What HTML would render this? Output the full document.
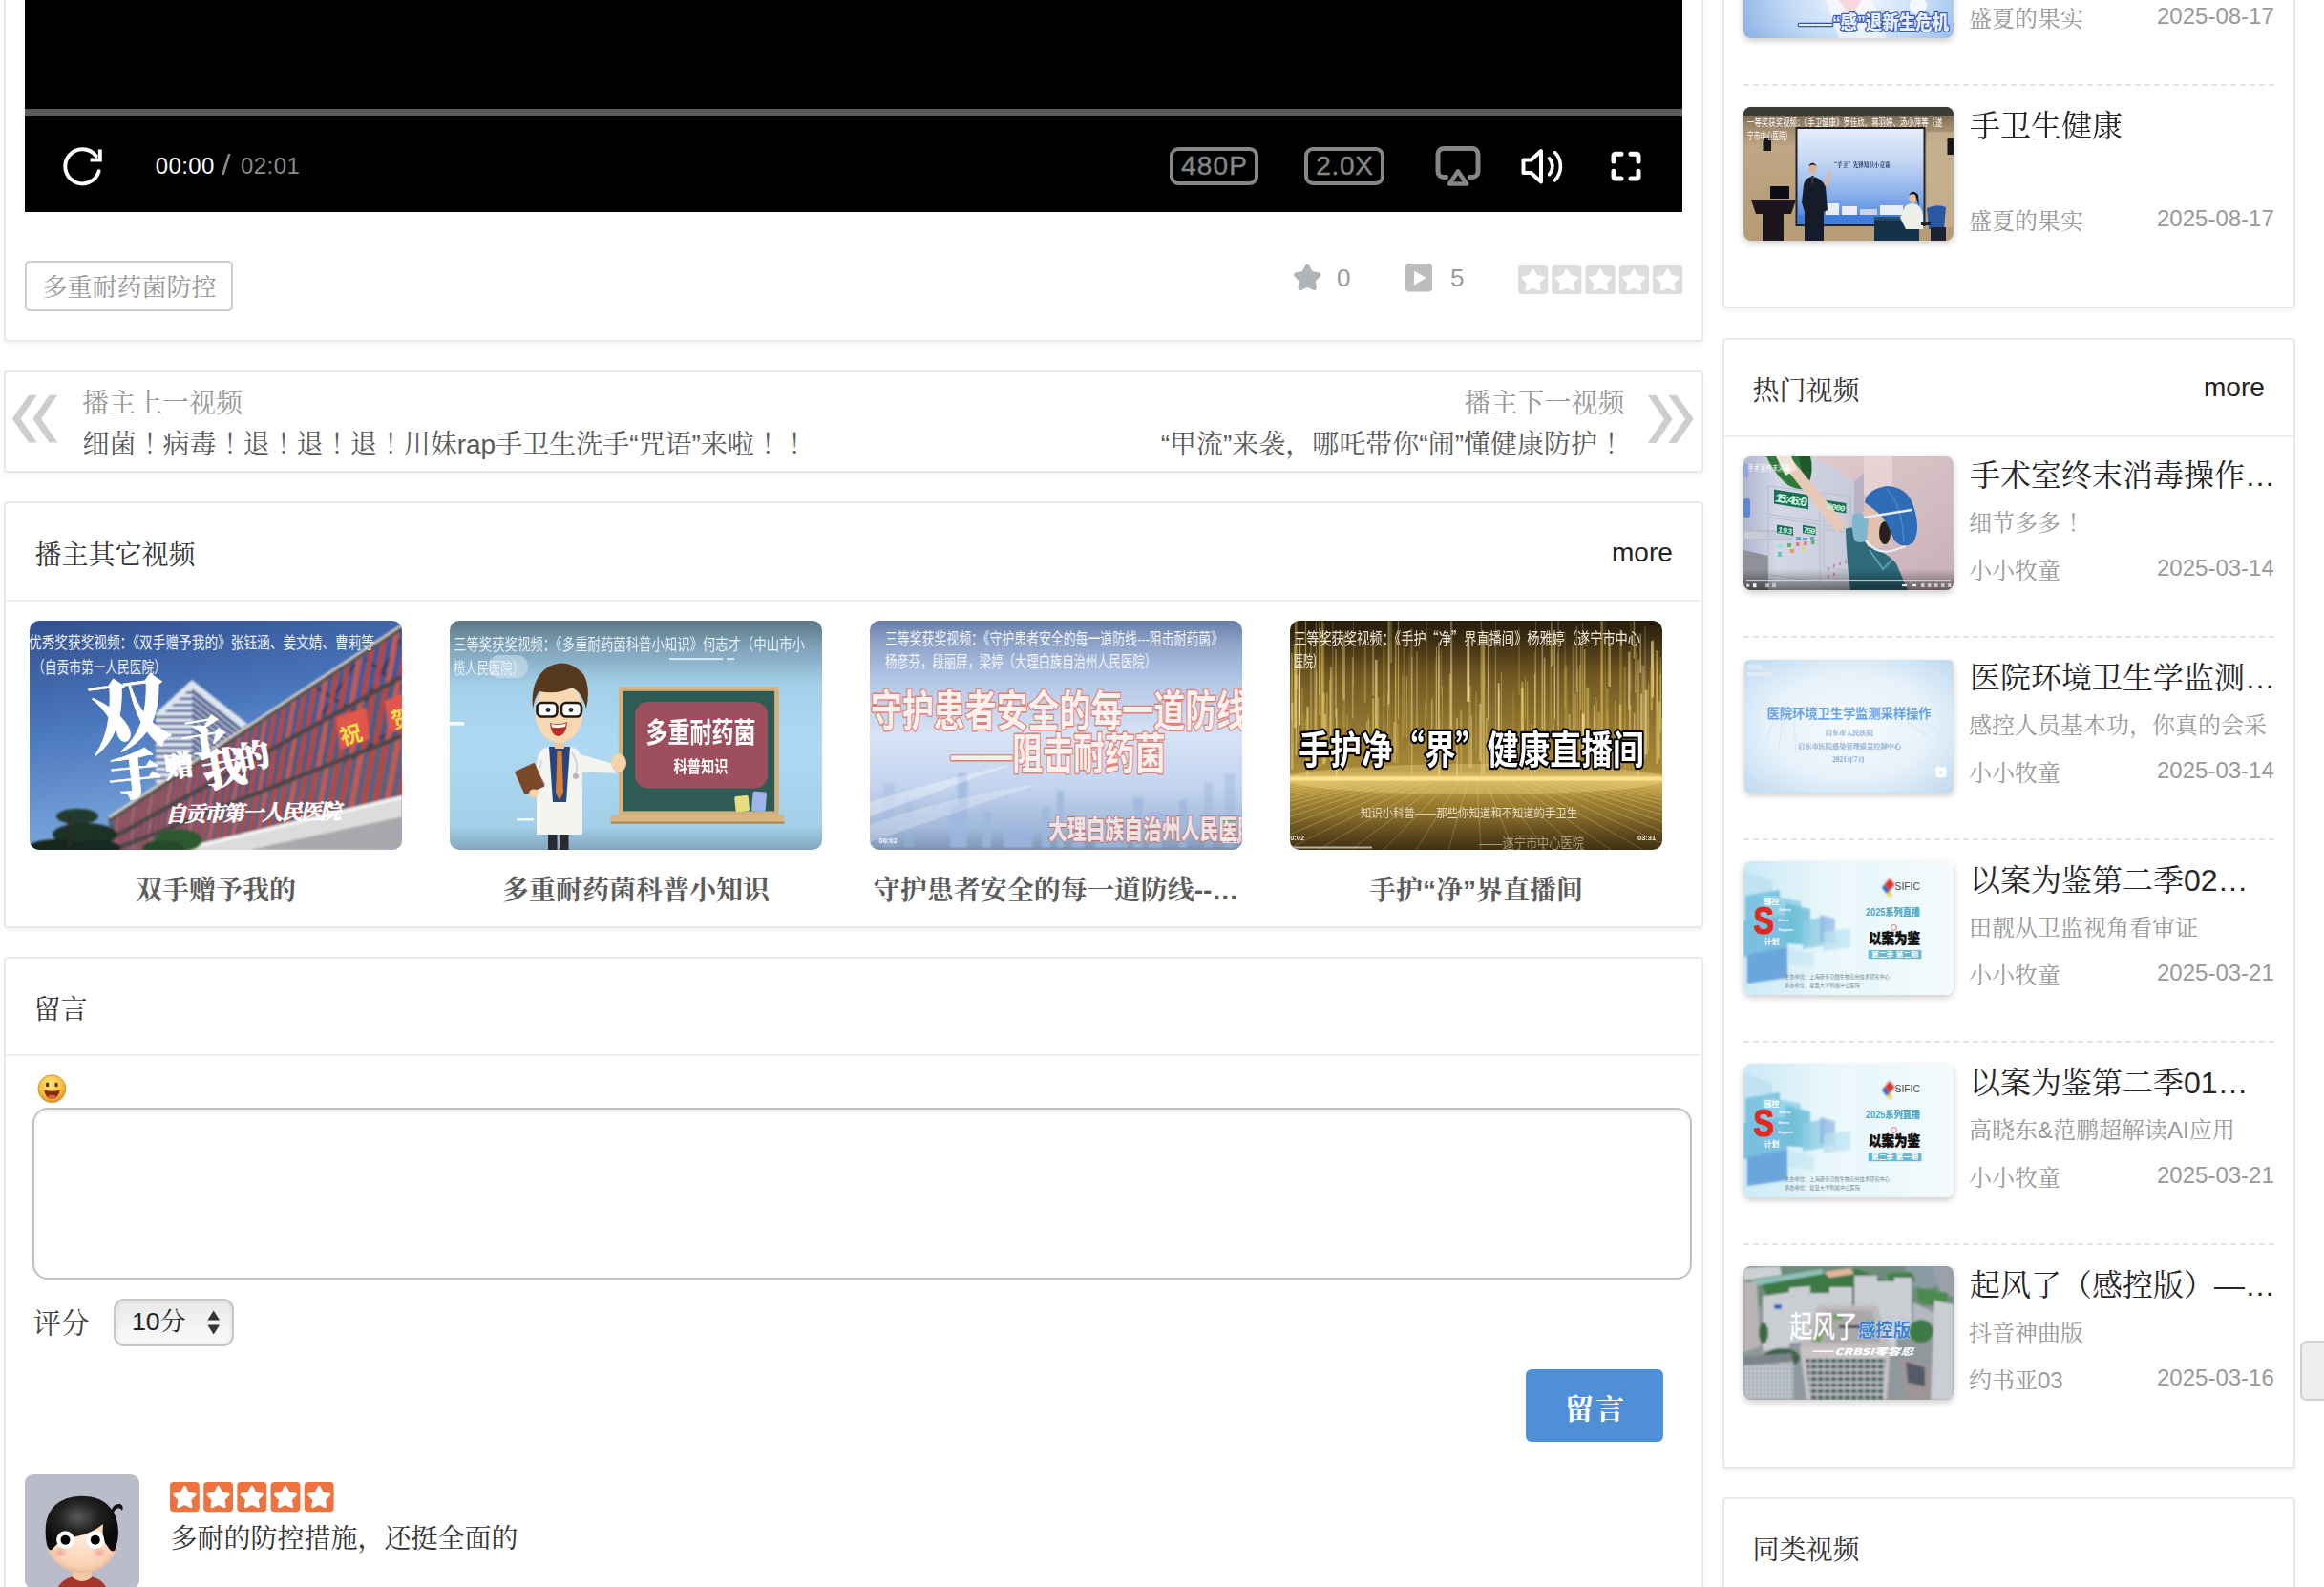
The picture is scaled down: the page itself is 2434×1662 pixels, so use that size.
<!DOCTYPE html>
<html lang="zh-CN">
<head>
<meta charset="utf-8">
<title>视频播放</title>
<style>
html,body{margin:0;padding:0;}
body{width:2434px;height:1662px;overflow:hidden;position:relative;background:#fff;
 font-family:"Liberation Sans","Noto Serif CJK SC",serif;color:#333;}
.card{position:absolute;box-sizing:border-box;background:#fff;border:2px solid #e9e9e9;border-radius:4px;
 box-shadow:0 3px 5px rgba(0,0,0,.045);}
.t{position:absolute;white-space:nowrap;line-height:1;margin:0;padding:0;}
.abs{position:absolute;}
.hr{position:absolute;height:2px;background:#f0f0f0;}
.dash{position:absolute;height:0;border-top:2px dashed #e3e3e3;}
.g9{color:#999;}
.ex{font-style:normal;position:relative;left:7.5px;}
.f24{font-size:24px;}
.f26{font-size:26px;}
.f28{font-size:28px;}
.f32{font-size:32px;}
.thumb{position:absolute;overflow:hidden;border-radius:10px;}
.sth{position:absolute;overflow:hidden;border-radius:8px;box-shadow:0 3px 7px rgba(0,0,0,.20);width:220px;height:140px;left:1826px;}
.ov{position:absolute;color:#fff;font-family:"Liberation Sans","Noto Sans CJK SC",sans-serif;white-space:nowrap;line-height:1;}
.ttl{position:absolute;font-size:28px;font-weight:700;color:#5c5c5c;line-height:1;width:390px;text-align:center;white-space:nowrap;top:919px;}
.stitle{left:2063px;color:#262626;}
.sdate{left:2259px;color:#999;font-size:24px;}
.ssub{left:2062px;color:#999;font-size:24px;}
</style>
</head>
<body>

<!-- ============ LEFT COLUMN ============ -->
<!-- card 1 : player -->
<div class="card" style="left:4px;top:-20px;width:1780px;height:378px;"></div>
<div class="abs" id="player" style="left:26px;top:0;width:1736px;height:222px;background:#000;"></div>
<div class="abs" style="left:26px;top:114px;width:1736px;height:8px;background:#5c5c5c;"></div>

<svg class="abs" style="left:0;top:0;" width="1800" height="380" viewBox="0 0 1800 380" fill="none">
 <!-- replay -->
 <path d="M103.6 179.2 A18 18 0 1 1 100.6 163.4" stroke="#fff" stroke-width="4" stroke-linecap="round"/>
 <path d="M94.5 167.5 H104.8 V156.5" stroke="#fff" stroke-width="4" stroke-linecap="butt" stroke-linejoin="miter"/>
 <!-- definition / speed boxes -->
 <rect x="1227" y="156" width="89" height="36" rx="7" stroke="#868686" stroke-width="4"/>
 <rect x="1368" y="156" width="80" height="36" rx="7" stroke="#868686" stroke-width="4"/>
 <!-- airplay -->
 <path d="M1514.5 185.5 H1512 A6 6 0 0 1 1506 179.5 V161.5 A6 6 0 0 1 1512 155.5 H1542 A6 6 0 0 1 1548 161.5 V179.5 A6 6 0 0 1 1542 185.5 H1539.5" stroke="#868686" stroke-width="5" stroke-linecap="round"/>
 <path d="M1527 179.5 L1536 192.5 H1518 Z" stroke="#868686" stroke-width="4.6" stroke-linejoin="round"/>
 <!-- volume -->
 <path d="M1595.5 167.5 H1603.5 L1614 158 V190.5 L1603.5 181 H1595.5 Z" stroke="#fff" stroke-width="4" stroke-linejoin="round"/>
 <path d="M1622.5 165.8 A12.5 12.5 0 0 1 1622.5 182.8" stroke="#fff" stroke-width="3.6" stroke-linecap="round"/>
 <path d="M1628.5 159.6 A21 21 0 0 1 1628.5 188.8" stroke="#fff" stroke-width="3.6" stroke-linecap="round"/>
 <!-- fullscreen -->
 <path d="M1690 169 V163.2 A2 2 0 0 1 1692 161.2 H1698 M1708 161.2 H1714 A2 2 0 0 1 1716 163.2 V169 M1716 179.2 V185 A2 2 0 0 1 1714 187 H1708 M1698 187 H1692 A2 2 0 0 1 1690 185 V179.2" stroke="#fff" stroke-width="5" stroke-linecap="round"/>
</svg>
<div class="t" style="left:162.8px;top:162px;font-size:24px;color:#fff;letter-spacing:.4px;">00:00</div>
<div class="t" style="left:232px;top:157.5px;font-size:30px;color:#8a8a8a;transform:scaleX(1.15);transform-origin:0 0;">/</div>
<div class="t" style="left:252px;top:162px;font-size:24px;color:#8c8c8c;letter-spacing:.45px;">02:01</div>
<div class="t" style="left:1225px;top:160px;width:93px;text-align:center;font-size:28px;color:#868686;letter-spacing:1.2px;text-indent:1.2px;-webkit-text-stroke:.4px #868686;">480P</div>
<div class="t" style="left:1366px;top:160px;width:84px;text-align:center;font-size:28px;color:#868686;letter-spacing:.7px;text-indent:.7px;-webkit-text-stroke:.4px #868686;">2.0X</div>


<!-- tag -->
<div class="abs" style="left:26px;top:273px;width:218px;height:53px;box-sizing:border-box;border:2px solid #ccc;border-radius:5px;"></div>
<div class="t f26 g9" style="left:44.5px;top:288px;">多重耐药菌防控</div>

<svg class="abs" style="left:1340px;top:260px;" width="440" height="60" viewBox="1340 260 440 60">
 <polygon points="1369.2,279.4 1373.0,286.4 1380.8,287.8 1375.3,293.6 1376.4,301.5 1369.2,298.0 1362.0,301.5 1363.1,293.6 1357.6,287.8 1365.4,286.4" fill="#b0b3b9" stroke="#b0b3b9" stroke-width="5" stroke-linejoin="round"/>
 <rect x="1472" y="276" width="28" height="29.5" rx="4" fill="#bdbdbd"/>
 <path d="M1481 283.5 L1493.6 291 L1481 298.8 Z" fill="#fff"/>
 <rect x="1590.0" y="278" width="31.2" height="30" rx="3.5" fill="#dddddd"/>
 <polygon points="1605.6,282.8 1609.1,289.4 1616.4,290.7 1611.2,296.0 1612.3,303.4 1605.6,300.1 1598.9,303.4 1600.0,296.0 1594.8,290.7 1602.1,289.4" fill="#fff" stroke="#fff" stroke-width="2.6" stroke-linejoin="round"/>
 <rect x="1625.2" y="278" width="31.2" height="30" rx="3.5" fill="#dddddd"/>
 <polygon points="1640.8,282.8 1644.3,289.4 1651.7,290.7 1646.5,296.0 1647.6,303.4 1640.8,300.1 1634.1,303.4 1635.2,296.0 1630.0,290.7 1637.4,289.4" fill="#fff" stroke="#fff" stroke-width="2.6" stroke-linejoin="round"/>
 <rect x="1660.5" y="278" width="31.2" height="30" rx="3.5" fill="#dddddd"/>
 <polygon points="1676.1,282.8 1679.6,289.4 1686.9,290.7 1681.7,296.0 1682.8,303.4 1676.1,300.1 1669.4,303.4 1670.5,296.0 1665.3,290.7 1672.6,289.4" fill="#fff" stroke="#fff" stroke-width="2.6" stroke-linejoin="round"/>
 <rect x="1695.8" y="278" width="31.2" height="30" rx="3.5" fill="#dddddd"/>
 <polygon points="1711.3,282.8 1714.8,289.4 1722.2,290.7 1717.0,296.0 1718.1,303.4 1711.3,300.1 1704.6,303.4 1705.7,296.0 1700.5,290.7 1707.9,289.4" fill="#fff" stroke="#fff" stroke-width="2.6" stroke-linejoin="round"/>
 <rect x="1731.0" y="278" width="31.2" height="30" rx="3.5" fill="#dddddd"/>
 <polygon points="1746.6,282.8 1750.1,289.4 1757.4,290.7 1752.2,296.0 1753.3,303.4 1746.6,300.1 1739.9,303.4 1741.0,296.0 1735.8,290.7 1743.1,289.4" fill="#fff" stroke="#fff" stroke-width="2.6" stroke-linejoin="round"/>
</svg>
<div class="t f26 g9" style="left:1400px;top:278px;">0</div>
<div class="t f26 g9" style="left:1519px;top:278px;">5</div>


<!-- card 2 : prev / next -->
<div class="card" style="left:4px;top:388px;width:1780px;height:107px;"></div>
<div class="t f28 g9" style="left:86px;top:409px;">播主上一视频</div>
<div class="t f28" style="left:86.5px;top:452px;color:#5a5a5a;">细菌<i class="ex">！</i>病毒<i class="ex">！</i>退<i class="ex">！</i>退<i class="ex">！</i>退<i class="ex">！</i>川妹rap手卫生洗手“咒语”来啦<i class="ex">！</i><i class="ex">！</i></div>
<div class="t f28 g9" style="right:732.5px;top:409px;">播主下一视频</div>
<div class="t f28" style="right:733px;top:452px;color:#5a5a5a;">“甲流”来袭，哪吒带你“闹”懂健康防护<i class="ex">！</i></div>
<svg class="abs" style="left:0;top:400px;" width="1800" height="80" viewBox="0 400 1800 80" fill="#cdcdcd">
 <polygon points="30.1,413.7 38.7,413.7 21.5,438.6 38.7,463.6 30.1,463.6 12.9,438.6"/>
 <polygon points="51.6,413.7 60.2,413.7 43,438.6 60.2,463.6 51.6,463.6 34.4,438.6"/>
 <polygon points="1725.8,413.7 1734.4,413.7 1751.6,438.8 1734.4,464 1725.8,464 1743,438.8"/>
 <polygon points="1747.3,413.7 1755.9,413.7 1773.8,438.8 1755.9,464 1747.3,464 1765.2,438.8"/>
</svg>


<!-- card 3 : other videos -->
<div class="card" style="left:4px;top:525px;width:1780px;height:447px;"></div>
<div class="t f28" style="left:36.5px;top:567.5px;color:#333;">播主其它视频</div>
<div class="t f28" style="left:1688px;top:564.5px;color:#222;">more</div>
<div class="hr" style="left:6px;top:628px;width:1776px;"></div>

<!-- THUMBS-BEGIN -->
<div class="thumb" style="left:31px;top:650px;width:390px;height:240px;"><svg width="390" height="240" viewBox="0 0 390 240" font-family="Liberation Sans,Noto Sans CJK SC,sans-serif">
<defs>
<linearGradient id="t1sky" x1="0" y1="0" x2=".25" y2="1"><stop offset="0" stop-color="#33508f"/><stop offset=".45" stop-color="#4a76bd"/><stop offset="1" stop-color="#7eaadf"/></linearGradient>
<linearGradient id="t1f1" x1="0" y1="0" x2="1" y2="0"><stop offset="0" stop-color="#5d5f78"/><stop offset="1" stop-color="#40599c"/></linearGradient>
<pattern id="t1b" width="8" height="6.4" patternUnits="userSpaceOnUse"><rect width="8" height="6.4" fill="#e6ebf3"/><rect y="3.6" width="8" height="2.8" fill="#50669a"/></pattern>
<pattern id="t1c" width="8" height="6.4" patternUnits="userSpaceOnUse" patternTransform="skewY(38)"><rect width="8" height="6.4" fill="#a9b5cf"/><rect y="3.4" width="8" height="3" fill="#36497a"/></pattern>
<filter id="b1"><feGaussianBlur stdDeviation="0.8"/></filter>
</defs>
<rect width="390" height="240" fill="url(#t1sky)"/>
<g filter="url(#b1)">
<polygon points="132,97 170,62 170,215 132,215" fill="url(#t1b)"/>
<polygon points="170,62 228,108 228,200 170,215" fill="url(#t1c)"/>
<polygon points="132,97 170,62 228,108 222,112 170,70 137,100" fill="#dfe5ee"/>
<polygon points="83.0,206.5 390.0,4.8 390.0,58.8 83.0,229.5" fill="url(#t1f1)" />
<polygon points="83.0,229.5 390.0,58.8 390.0,120.9 83.0,241.9" fill="#505a80" />
<polygon points="83.0,241.9 390.0,120.9 390.0,183.3 83.0,256.1" fill="#5c6180" />
<g stroke="#2d3350" stroke-width="3" opacity=".8"><line x1="300" y1="70" x2="345" y2="98"/><line x1="340" y1="46" x2="300" y2="108"/><line x1="352" y1="40" x2="390" y2="70"/><line x1="388" y1="20" x2="352" y2="84"/><line x1="330" y1="150" x2="372" y2="120"/></g>
<polygon points="92.7,200.1 95.2,198.5 90.5,225.4 88.0,226.7" fill="#c65a4b" />
<polygon points="90.6,225.3 93.1,223.9 90.5,238.9 88.0,239.9" fill="#c65a4b" />
<polygon points="91.0,238.7 93.5,237.8 90.5,254.3 88.0,254.9" fill="#c65a4b" />
<polygon points="98.2,196.5 100.7,194.9 95.9,222.4 93.3,223.8" fill="#b8473b" />
<polygon points="96.1,222.2 98.7,220.8 95.9,236.8 93.3,237.8" fill="#b8473b" />
<polygon points="96.5,236.6 99.0,235.6 95.9,253.0 93.3,253.6" fill="#b8473b" />
<polygon points="103.8,192.8 106.4,191.1 101.4,219.3 98.8,220.7" fill="#b8473b" />
<polygon points="101.8,219.1 104.4,217.6 101.4,234.6 98.8,235.6" fill="#b8473b" />
<polygon points="102.2,234.3 104.8,233.3 101.4,251.7 98.8,252.3" fill="#b8473b" />
<polygon points="109.5,189.1 112.2,187.3 107.1,216.1 104.5,217.6" fill="#c65a4b" />
<polygon points="107.6,215.8 110.3,214.3 107.1,232.4 104.5,233.4" fill="#c65a4b" />
<polygon points="108.0,232.0 110.7,231.0 107.1,250.4 104.5,251.0" fill="#c65a4b" />
<polygon points="115.4,185.2 118.2,183.4 113.0,212.8 110.3,214.4" fill="#b8473b" />
<polygon points="113.6,212.5 116.4,211.0 113.0,230.1 110.3,231.1" fill="#b8473b" />
<polygon points="114.0,229.7 116.7,228.6 113.0,249.0 110.3,249.6" fill="#b8473b" />
<polygon points="121.5,181.2 124.3,179.3 119.1,209.5 116.2,211.0" fill="#b8473b" />
<polygon points="119.8,209.1 122.6,207.5 119.1,227.7 116.2,228.8" fill="#b8473b" />
<polygon points="120.1,227.3 122.9,226.1 119.1,247.5 116.2,248.2" fill="#b8473b" />
<polygon points="127.8,177.1 130.7,175.2 125.3,206.0 122.4,207.6" fill="#c65a4b" />
<polygon points="126.1,205.5 129.0,203.9 125.3,225.2 122.4,226.4" fill="#c65a4b" />
<polygon points="126.4,224.8 129.3,223.6 125.3,246.1 122.4,246.8" fill="#c65a4b" />
<polygon points="134.2,172.8 137.2,170.9 131.7,202.5 128.7,204.1" fill="#b8473b" />
<polygon points="132.6,201.9 135.6,200.3 131.7,222.7 128.7,223.9" fill="#b8473b" />
<polygon points="132.9,222.2 135.9,221.0 131.7,244.6 128.7,245.3" fill="#b8473b" />
<polygon points="140.8,168.5 143.9,166.5 138.2,198.8 135.2,200.5" fill="#b8473b" />
<polygon points="139.3,198.2 142.4,196.5 138.2,220.1 135.2,221.3" fill="#b8473b" />
<polygon points="139.6,219.6 142.7,218.4 138.2,243.0 135.2,243.7" fill="#b8473b" />
<polygon points="147.6,164.0 150.8,162.0 145.0,195.1 141.8,196.8" fill="#c65a4b" />
<polygon points="146.2,194.4 149.3,192.6 145.0,217.5 141.8,218.7" fill="#c65a4b" />
<polygon points="146.5,216.9 149.6,215.6 145.0,241.4 141.8,242.1" fill="#c65a4b" />
<polygon points="154.6,159.4 157.8,157.3 151.9,191.2 148.7,193.0" fill="#b8473b" />
<polygon points="153.3,190.5 156.5,188.7 151.9,214.7 148.7,216.0" fill="#b8473b" />
<polygon points="153.6,214.1 156.8,212.8 151.9,239.8 148.7,240.5" fill="#b8473b" />
<polygon points="161.8,154.7 165.1,152.5 159.0,187.2 155.7,189.1" fill="#b8473b" />
<polygon points="160.5,186.4 163.9,184.6 159.0,211.9 155.7,213.2" fill="#b8473b" />
<polygon points="160.8,211.2 164.2,209.9 159.0,238.1 155.7,238.9" fill="#b8473b" />
<polygon points="169.2,149.9 172.6,147.6 166.4,183.2 162.9,185.1" fill="#c65a4b" />
<polygon points="168.0,182.3 171.4,180.4 166.4,209.0 162.9,210.4" fill="#c65a4b" />
<polygon points="168.3,208.3 171.7,206.9 166.4,236.3 162.9,237.1" fill="#c65a4b" />
<polygon points="176.7,144.9 180.3,142.6 173.9,179.0 170.4,180.9" fill="#b8473b" />
<polygon points="175.7,178.0 179.2,176.0 173.9,206.1 170.4,207.5" fill="#b8473b" />
<polygon points="176.0,205.3 179.5,203.9 173.9,234.5 170.4,235.4" fill="#b8473b" />
<polygon points="184.6,139.8 188.2,137.4 181.6,174.7 178.0,176.7" fill="#b8473b" />
<polygon points="183.6,173.6 187.2,171.6 181.6,203.0 178.0,204.4" fill="#b8473b" />
<polygon points="183.8,202.2 187.5,200.7 181.6,232.7 178.0,233.6" fill="#b8473b" />
<polygon points="192.6,134.5 196.3,132.0 189.6,170.2 185.9,172.3" fill="#c65a4b" />
<polygon points="191.7,169.1 195.4,167.0 189.6,199.9 185.9,201.3" fill="#c65a4b" />
<polygon points="192.0,199.0 195.7,197.5 189.6,230.8 185.9,231.7" fill="#c65a4b" />
<polygon points="200.8,129.1 204.6,126.6 197.8,165.7 194.0,167.8" fill="#b8473b" />
<polygon points="200.0,164.4 203.9,162.3 197.8,196.7 194.0,198.2" fill="#b8473b" />
<polygon points="200.3,195.7 204.1,194.2 197.8,228.9 194.0,229.8" fill="#b8473b" />
<polygon points="209.3,123.5 213.2,120.9 206.2,161.0 202.3,163.2" fill="#b8473b" />
<polygon points="208.6,159.7 212.5,157.5 206.2,193.3 202.3,194.9" fill="#b8473b" />
<polygon points="208.9,192.3 212.8,190.7 206.2,226.9 202.3,227.8" fill="#b8473b" />
<polygon points="218.0,117.8 222.0,115.1 214.9,156.2 210.8,158.4" fill="#c65a4b" />
<polygon points="217.4,154.8 221.5,152.5 214.9,189.9 210.8,191.5" fill="#c65a4b" />
<polygon points="217.7,188.8 221.7,187.2 214.9,224.8 210.8,225.8" fill="#c65a4b" />
<polygon points="227.0,111.9 231.1,109.2 223.8,151.3 219.6,153.6" fill="#b8473b" />
<polygon points="226.5,149.7 230.6,147.4 223.8,186.4 219.6,188.1" fill="#b8473b" />
<polygon points="226.7,185.3 230.9,183.6 223.8,222.7 219.6,223.7" fill="#b8473b" />
<polygon points="236.2,105.8 240.4,103.0 232.9,146.2 228.6,148.5" fill="#b8473b" />
<polygon points="235.8,144.6 240.1,142.2 232.9,182.8 228.6,184.5" fill="#b8473b" />
<polygon points="236.0,181.6 240.3,179.9 232.9,220.6 228.6,221.6" fill="#b8473b" />
<polygon points="245.6,99.6 250.0,96.7 242.3,140.9 237.9,143.4" fill="#c65a4b" />
<polygon points="245.4,139.2 249.8,136.8 242.3,179.1 237.9,180.9" fill="#c65a4b" />
<polygon points="245.6,177.8 250.0,176.1 242.3,218.3 237.9,219.4" fill="#c65a4b" />
<polygon points="255.4,93.2 259.9,90.3 252.0,135.6 247.4,138.1" fill="#b8473b" />
<polygon points="255.2,133.7 259.8,131.2 252.0,175.3 247.4,177.1" fill="#b8473b" />
<polygon points="255.4,173.9 260.0,172.2 252.0,216.0 247.4,217.1" fill="#b8473b" />
<polygon points="265.4,86.7 270.0,83.6 261.9,130.1 257.2,132.6" fill="#b8473b" />
<polygon points="265.4,128.1 270.0,125.5 261.9,171.4 257.2,173.2" fill="#b8473b" />
<polygon points="265.6,170.0 270.2,168.1 261.9,213.7 257.2,214.8" fill="#b8473b" />
<polygon points="275.7,79.9 280.4,76.8 272.1,124.4 267.3,127.0" fill="#c65a4b" />
<polygon points="275.8,122.3 280.5,119.7 272.1,167.4 267.3,169.3" fill="#c65a4b" />
<polygon points="276.0,165.9 280.7,164.0 272.1,211.3 267.3,212.4" fill="#c65a4b" />
<polygon points="286.2,73.0 291.1,69.7 282.6,118.5 277.7,121.3" fill="#b8473b" />
<polygon points="286.5,116.4 291.4,113.7 282.6,163.2 277.7,165.2" fill="#b8473b" />
<polygon points="286.6,161.6 291.5,159.7 282.6,208.8 277.7,209.9" fill="#b8473b" />
<polygon points="297.1,65.8 302.1,62.5 293.4,112.5 288.3,115.3" fill="#b8473b" />
<polygon points="297.5,110.3 302.5,107.5 293.4,159.0 288.3,161.0" fill="#b8473b" />
<polygon points="297.6,157.3 302.7,155.3 293.4,206.2 288.3,207.4" fill="#b8473b" />
<polygon points="308.3,58.5 313.5,55.1 304.5,106.4 299.3,109.3" fill="#c65a4b" />
<polygon points="308.8,104.0 314.0,101.1 304.5,154.6 299.3,156.7" fill="#c65a4b" />
<polygon points="308.9,152.9 314.1,150.8 304.5,203.6 299.3,204.8" fill="#c65a4b" />
<polygon points="319.8,50.9 325.1,47.4 315.9,100.0 310.6,103.0" fill="#b8473b" />
<polygon points="320.4,97.5 325.7,94.6 315.9,150.1 310.6,152.2" fill="#b8473b" />
<polygon points="320.5,148.3 325.9,146.2 315.9,200.9 310.6,202.2" fill="#b8473b" />
<polygon points="331.6,43.2 337.0,39.6 327.6,93.5 322.1,96.6" fill="#b8473b" />
<polygon points="332.4,90.9 337.8,87.8 327.6,145.5 322.1,147.7" fill="#b8473b" />
<polygon points="332.5,143.6 338.0,141.4 327.6,198.1 322.1,199.4" fill="#b8473b" />
<polygon points="343.7,35.2 349.3,31.5 339.7,86.8 334.0,89.9" fill="#c65a4b" />
<polygon points="344.6,84.0 350.3,80.9 339.7,140.8 334.0,143.0" fill="#c65a4b" />
<polygon points="344.8,138.8 350.4,136.5 339.7,195.3 334.0,196.6" fill="#c65a4b" />
<polygon points="356.2,27.0 362.0,23.2 352.1,79.9 346.3,83.1" fill="#b8473b" />
<polygon points="357.3,77.0 363.1,73.8 352.1,135.9 346.3,138.2" fill="#b8473b" />
<polygon points="357.4,133.8 363.2,131.5 352.1,192.3 346.3,193.7" fill="#b8473b" />
<polygon points="369.0,18.6 375.0,14.7 364.8,72.8 358.8,76.1" fill="#b8473b" />
<polygon points="370.3,69.8 376.2,66.5 364.8,130.9 358.8,133.2" fill="#b8473b" />
<polygon points="370.3,128.7 376.3,126.3 364.8,189.3 358.8,190.7" fill="#b8473b" />
<polygon points="382.2,9.9 388.3,5.9 377.9,65.6 371.8,69.0" fill="#c65a4b" />
<polygon points="383.6,62.4 389.7,59.0 377.9,125.7 371.8,128.1" fill="#c65a4b" />
<polygon points="383.7,123.4 389.8,121.0 377.9,186.2 371.8,187.6" fill="#c65a4b" />
<polygon points="395.8,1.0 402.1,-3.1 391.3,58.1 385.1,61.6" fill="#b8473b" />
<polygon points="397.3,54.8 403.6,51.3 391.3,120.4 385.1,122.9" fill="#b8473b" />
<polygon points="397.4,118.0 403.7,115.5 391.3,183.0 385.1,184.5" fill="#b8473b" />
<g fill="none"><line x1="83" y1="229.5" x2="390" y2="58.8" stroke="#4b4649" stroke-width="4.5"/><line x1="83" y1="241.9" x2="390" y2="120.9" stroke="#4b4649" stroke-width="4.5"/><line x1="83" y1="209.0" x2="390" y2="7.3" stroke="#5a5250" stroke-width="5"/><line x1="83" y1="206.0" x2="390" y2="4.3" stroke="#e2dbd2" stroke-width="2.2"/></g>
<polygon points="120.0,247.3 390.0,183.3 390.0,240.0 120.0,248.0" fill="#dcdcda" />
<polygon points="230.0,240.0 390.0,205.3 390.0,240.0" fill="#a9a9ad" />
<polygon points="120.0,247.3 390.0,183.3 390.0,187.3 120.0,251.3" fill="#f2f2f0" />
<polygon points="321,101 352,91 356,124 325,135" fill="#e2574b"/>
<polygon points="372,84 392,76 392,112 376,118" fill="#e2574b"/>
<ellipse cx="50" cy="205" rx="22" ry="8" fill="#203a2e"/><ellipse cx="58" cy="224" rx="34" ry="12" fill="#1c3226"/><ellipse cx="28" cy="238" rx="30" ry="9" fill="#15261e"/>
<ellipse cx="70" cy="238" rx="26" ry="8" fill="#172a20"/>
<ellipse cx="156" cy="230" rx="25" ry="12" fill="#2e5a32"/><ellipse cx="140" cy="238" rx="22" ry="8" fill="#25482a"/>
<rect x="40" y="206" width="3" height="30" fill="#2a2a22"/>
</g>
<text x="324" y="127" font-size="23" fill="#f3e04e" font-weight="700" transform="rotate(-16 338 115)">祝</text>
<text x="378" y="112" font-size="23" fill="#f3e04e" font-weight="700" transform="rotate(-16 385 100)">贺</text>
<text x="-1" y="29.2" font-size="17" fill="#eef2fa" textLength="362" lengthAdjust="spacingAndGlyphs" >优秀奖获奖视频：《双手赠予我的》张钰涵、姜文婧、曹莉等</text>
<text x="3" y="54.8" font-size="17" fill="#eef2fa" textLength="140" lengthAdjust="spacingAndGlyphs" >（自贡市第一人民医院）</text>
<g font-family="Noto Serif CJK SC,serif" font-weight="900" fill="#fff" stroke="#fff" stroke-width=".7">
<text x="62" y="128" font-size="84" transform="rotate(-8 105 100)">双</text>
<text x="82" y="182" font-size="56" transform="rotate(-6 110 160)">手</text>
<text x="141" y="163" font-size="30" transform="rotate(-8 155 150)">赠</text>
<text x="158" y="142" font-size="48" transform="rotate(-10 175 120)">予</text>
<text x="180" y="172" font-size="46" transform="rotate(-10 200 150)">我</text>
<text x="217" y="155" font-size="34" transform="rotate(-12 230 140)">的</text>
<text x="142" y="209" font-size="22" font-weight="700" font-style="italic" textLength="184" transform="rotate(-1 230 200)">自贡市第一人民医院</text>
</g>
</svg></div>
<div class="thumb" style="left:471px;top:650px;width:390px;height:240px;"><svg width="390" height="240" viewBox="0 0 390 240" font-family="Liberation Sans,Noto Sans CJK SC,sans-serif">
<defs>
<linearGradient id="t2bg" x1="0" y1="0" x2="0" y2="1"><stop offset="0" stop-color="#5d7886"/><stop offset=".12" stop-color="#7fa3ba"/><stop offset=".28" stop-color="#a4cfe8"/><stop offset=".55" stop-color="#afd9f3"/><stop offset=".9" stop-color="#a3cfe9"/><stop offset="1" stop-color="#7fa6bd"/></linearGradient>
<filter id="b2"><feGaussianBlur stdDeviation="0.6"/></filter>
</defs>
<rect width="390" height="240" fill="url(#t2bg)"/>
<g filter="url(#b2)">
<rect x="0" y="106" width="15" height="3.5" fill="#fff"/><rect x="70" y="207" width="18" height="2.5" fill="#fff" opacity=".9"/>
<rect x="230" y="39" width="56" height="2.2" fill="#e8f1f6" opacity=".8"/><rect x="290" y="39" width="8" height="2.2" fill="#e8f1f6" opacity=".8"/>
<rect x="40" y="36" width="42" height="24" rx="12" fill="#d6e6ee" opacity=".55"/>
<!-- board -->
<rect x="176.8" y="69" width="168" height="135" fill="#d4b17c"/>
<rect x="181.5" y="73.8" width="158.6" height="125.6" fill="#2f5b55"/>
<rect x="168.6" y="203.3" width="181.7" height="9" fill="#d9b680"/>
<rect x="168.6" y="210.5" width="181.7" height="2.2" fill="#a88a5c"/>
<rect x="194" y="85" width="139" height="90.5" rx="14" fill="#9e4f5d"/>
<rect x="298.8" y="183.4" width="14.6" height="16.4" rx="2" fill="#e8dd7d" transform="rotate(-6 306 191)"/>
<rect x="316.8" y="179" width="14.6" height="20.8" rx="2.5" fill="#9fb4ea" transform="rotate(5 324 189)"/>
<!-- doctor -->
<rect x="103" y="222" width="9.5" height="20" fill="#2a2a2e"/><rect x="115" y="222" width="9.5" height="20" fill="#2a2a2e"/>
<path d="M91 150 Q92 134 104 132 H126 Q138 134 139 150 V224 H91 Z" fill="#f3f3ef"/>
<path d="M136 140 L172 150 L174 160 L137 158 Z" fill="#f3f3ef"/>
<path d="M104 132 H126 L122 190 H108 Z" fill="#28467e"/>
<path d="M112.5 136 H117.5 L119 180 L115 188 L111 180 Z" fill="#d9803c"/>
<path d="M96 146 Q92 160 100 172" fill="none" stroke="#c9c9c9" stroke-width="1.4"/><path d="M128 138 Q136 150 132 160" fill="none" stroke="#c9c9c9" stroke-width="1.4"/><circle cx="132" cy="163" r="3" fill="#b5b5b5"/>
<ellipse cx="177" cy="149" rx="8" ry="9.5" fill="#f6d2a8"/>
<path d="M91 150 L84 176 L92 180 L99 160 Z" fill="#f3f3ef"/>
<rect x="72" y="152" width="23" height="27" rx="1.5" fill="#7a4a2c" transform="rotate(-24 84 165)"/>
<ellipse cx="88" cy="181" rx="5" ry="4.5" fill="#f6d2a8"/>
<rect x="110" y="122" width="10" height="12" fill="#efc79c"/>
<ellipse cx="114.5" cy="96" rx="25" ry="32" fill="#f8d8b2"/>
<path d="M87 92 Q84 60 104 48 Q124 38 140 56 Q148 70 143 92 Q138 74 128 70 Q112 78 94 74 Q89 80 87 92 Z" fill="#57371f"/>
<rect x="91.5" y="86" width="21" height="14.5" rx="5" fill="#fff" stroke="#1f1a18" stroke-width="2.6"/><rect x="117" y="86" width="21" height="14.5" rx="5" fill="#fff" stroke="#1f1a18" stroke-width="2.6"/>
<circle cx="103" cy="93.5" r="2.4" fill="#222"/><circle cx="127" cy="93.5" r="2.4" fill="#222"/>
<path d="M105 107 Q114 110 123 106 Q122 121 113 121 Q106 120 105 107 Z" fill="#b9322e"/><path d="M106.5 108 Q114 110.5 121.8 107.4 L121 111 Q114 113 107 111.5 Z" fill="#fff"/>
</g>
<text x="205.5" y="127.6" font-size="29" fill="#fff" textLength="115" lengthAdjust="spacingAndGlyphs" font-weight="700">多重耐药菌</text>
<text x="234.5" y="159" font-size="17" fill="#fff" textLength="57" lengthAdjust="spacingAndGlyphs" font-weight="700">科普知识</text>
<text x="4" y="30.5" font-size="17" fill="#e9f1f6" textLength="368" lengthAdjust="spacingAndGlyphs" >三等奖获奖视频：《多重耐药菌科普小知识》何志才（中山市小</text>
<text x="4" y="55.5" font-size="17" fill="#e9f1f6" textLength="74" lengthAdjust="spacingAndGlyphs" >榄人民医院）</text>
</svg></div>
<div class="thumb" style="left:911px;top:650px;width:390px;height:240px;"><svg width="390" height="240" viewBox="0 0 390 240" font-family="Liberation Sans,Noto Sans CJK SC,sans-serif">
<defs>
<linearGradient id="t3bg" x1="0" y1="0" x2="0" y2="1"><stop offset="0" stop-color="#6a7fa8"/><stop offset=".1" stop-color="#8ea3c8"/><stop offset=".25" stop-color="#b1c5e6"/><stop offset=".5" stop-color="#d7e3f6"/><stop offset=".72" stop-color="#c3d4ee"/><stop offset=".9" stop-color="#a3badb"/><stop offset="1" stop-color="#8096b7"/></linearGradient>
<filter id="b3"><feGaussianBlur stdDeviation="1.2"/></filter>
</defs>
<rect width="390" height="240" fill="url(#t3bg)"/>
<g filter="url(#b3)" fill="#9db7e0" opacity=".75">
<rect x="92" y="160" width="10" height="80"/><rect x="84" y="192" width="8" height="48"/><rect x="118" y="200" width="9" height="40"/><rect x="14" y="170" width="12" height="70" opacity=".5"/><rect x="36" y="186" width="10" height="54" opacity=".5"/>
<rect x="180" y="196" width="9" height="44"/><rect x="196" y="178" width="7" height="62"/><rect x="212" y="206" width="12" height="34"/><rect x="276" y="186" width="10" height="54"/><rect x="292" y="200" width="14" height="40"/><rect x="324" y="188" width="8" height="52"/><rect x="350" y="170" width="9" height="70" opacity=".6"/><rect x="372" y="160" width="10" height="80" opacity=".6"/>
<rect x="140" y="214" width="30" height="26"/><rect x="236" y="212" width="34" height="28"/>
</g>
<path d="M0 190 Q60 170 150 150 L0 205 Z" fill="#fff" opacity=".35"/>
<path d="M0 214 Q60 190 180 170 L0 232 Z" fill="#fff" opacity=".25"/>
<text x="16" y="25" font-size="17" fill="#f3f6fc" textLength="354" lengthAdjust="spacingAndGlyphs" >三等奖获奖视频：《守护患者安全的每一道防线---阻击耐药菌》</text>
<text x="16" y="48.6" font-size="17" fill="#f3f6fc" textLength="284" lengthAdjust="spacingAndGlyphs" >杨彦芬，段丽屏，梁婷（大理白族自治州人民医院）</text>
<text x="1" y="110.5" font-size="45" fill="#fdf1ef" textLength="395" lengthAdjust="spacingAndGlyphs" font-weight="700" stroke="#e27f74" stroke-width="2.8" paint-order="stroke" stroke-linejoin="round">守护患者安全的每一道防线</text>
<text x="85" y="155.5" font-size="45" fill="#fdf1ef" textLength="225" lengthAdjust="spacingAndGlyphs" font-weight="700" stroke="#e27f74" stroke-width="2.8" paint-order="stroke" stroke-linejoin="round">——阻击耐药菌</text>
<text x="187" y="229" font-size="28" fill="#e9e3e6" textLength="218" lengthAdjust="spacingAndGlyphs" font-weight="900" stroke="#c8685f" stroke-width="1.8" paint-order="stroke">大理白族自治州人民医院</text>
<text x="9.5" y="233" font-size="7.5" fill="#f4f6fa" font-weight="700">00:02</text>
<text x="369" y="233" font-size="7.5" fill="#f4f6fa" font-weight="700">02:11</text>
<rect x="0" y="237.5" width="390" height="2.5" fill="#7d8fa8" opacity=".8"/>
</svg></div>
<div class="thumb" style="left:1351px;top:650px;width:390px;height:240px;"><svg width="390" height="240" viewBox="0 0 390 240" font-family="Liberation Sans,Noto Sans CJK SC,sans-serif">
<defs>
<linearGradient id="t4bg" x1="0" y1="0" x2="0" y2="1"><stop offset="0" stop-color="#3b2c12"/><stop offset=".2" stop-color="#6b5322"/><stop offset=".45" stop-color="#8f7430"/><stop offset=".66" stop-color="#a98a3a"/><stop offset=".69" stop-color="#e8c660"/><stop offset=".705" stop-color="#c9a64a"/><stop offset=".8" stop-color="#9a7c32"/><stop offset="1" stop-color="#5a461c"/></linearGradient>
<radialGradient id="t4gl" cx="50%" cy="69%" r="60%" gradientTransform="scale(1 .5) translate(0 .69)"><stop offset="0" stop-color="#ffe9a0" stop-opacity=".55"/><stop offset="1" stop-color="#ffe9a0" stop-opacity="0"/></radialGradient>
<linearGradient id="t4v" x1="0" y1="0" x2="0" y2="1"><stop offset="0" stop-color="#000" stop-opacity=".35"/><stop offset=".25" stop-color="#000" stop-opacity="0"/><stop offset=".85" stop-color="#000" stop-opacity="0"/><stop offset="1" stop-color="#000" stop-opacity=".3"/></linearGradient>
<filter id="b4"><feGaussianBlur stdDeviation="0.5"/></filter>
</defs>
<rect width="390" height="240" fill="url(#t4bg)"/>
<g filter="url(#b4)">
<rect x="126.3" y="8.1" width="2.2" height="116.7" fill="#e9cf7a" opacity="0.34"/>
<rect x="142.6" y="-3.0" width="1.6" height="105.5" fill="#c9a648" opacity="0.32"/>
<rect x="27.2" y="0.9" width="0.8" height="93.1" fill="#d8b858" opacity="0.80"/>
<rect x="245.9" y="60.0" width="0.8" height="44.1" fill="#d8b858" opacity="0.65"/>
<rect x="18.2" y="93.0" width="0.8" height="49.6" fill="#f5e3a0" opacity="0.39"/>
<rect x="218.5" y="71.8" width="1.0" height="45.6" fill="#f5e3a0" opacity="0.64"/>
<rect x="38.0" y="75.5" width="1.6" height="68.5" fill="#c9a648" opacity="0.67"/>
<rect x="303.1" y="45.9" width="1.0" height="114.0" fill="#d8b858" opacity="0.52"/>
<rect x="272.6" y="19.3" width="1.2" height="101.3" fill="#c9a648" opacity="0.62"/>
<rect x="112.3" y="107.6" width="1.2" height="42.2" fill="#d8b858" opacity="0.55"/>
<rect x="364.0" y="40.6" width="2.2" height="122.2" fill="#f5e3a0" opacity="0.35"/>
<rect x="132.6" y="32.0" width="0.8" height="86.7" fill="#e9cf7a" opacity="0.78"/>
<rect x="368.4" y="46.9" width="2.8" height="92.5" fill="#f5e3a0" opacity="0.34"/>
<rect x="252.4" y="109.2" width="1.6" height="53.8" fill="#f5e3a0" opacity="0.47"/>
<rect x="8.8" y="45.4" width="0.8" height="53.5" fill="#d8b858" opacity="0.37"/>
<rect x="299.6" y="5.5" width="1.6" height="69.8" fill="#e9cf7a" opacity="0.53"/>
<rect x="64.9" y="38.2" width="1.6" height="64.4" fill="#f5e3a0" opacity="0.38"/>
<rect x="275.5" y="108.4" width="1.0" height="52.0" fill="#d8b858" opacity="0.53"/>
<rect x="32.4" y="8.2" width="2.2" height="117.6" fill="#d8b858" opacity="0.31"/>
<rect x="102.5" y="-9.5" width="2.2" height="96.8" fill="#f5e3a0" opacity="0.52"/>
<rect x="371.7" y="72.9" width="2.8" height="67.4" fill="#e9cf7a" opacity="0.67"/>
<rect x="178.1" y="94.5" width="2.2" height="70.0" fill="#c9a648" opacity="0.71"/>
<rect x="155.2" y="37.3" width="1.0" height="82.7" fill="#e9cf7a" opacity="0.54"/>
<rect x="384.0" y="42.9" width="0.8" height="49.1" fill="#e9cf7a" opacity="0.66"/>
<rect x="221.0" y="54.4" width="0.8" height="108.0" fill="#d8b858" opacity="0.67"/>
<rect x="239.5" y="7.8" width="1.2" height="69.8" fill="#c9a648" opacity="0.51"/>
<rect x="47.9" y="91.9" width="1.6" height="73.9" fill="#f5e3a0" opacity="0.58"/>
<rect x="33.5" y="2.3" width="2.8" height="82.4" fill="#d8b858" opacity="0.46"/>
<rect x="201.4" y="14.6" width="2.8" height="146.0" fill="#e9cf7a" opacity="0.52"/>
<rect x="295.7" y="25.8" width="1.2" height="104.4" fill="#f5e3a0" opacity="0.35"/>
<rect x="354.2" y="32.7" width="2.2" height="60.8" fill="#f5e3a0" opacity="0.62"/>
<rect x="248.2" y="63.6" width="1.0" height="89.2" fill="#d8b858" opacity="0.75"/>
<rect x="319.1" y="78.8" width="1.2" height="50.7" fill="#e9cf7a" opacity="0.61"/>
<rect x="385.9" y="84.8" width="2.2" height="59.4" fill="#f5e3a0" opacity="0.42"/>
<rect x="174.4" y="102.4" width="1.2" height="63.3" fill="#e9cf7a" opacity="0.87"/>
<rect x="86.0" y="17.2" width="2.2" height="61.4" fill="#e9cf7a" opacity="0.42"/>
<rect x="187.0" y="68.4" width="2.8" height="86.1" fill="#e9cf7a" opacity="0.35"/>
<rect x="354.8" y="83.9" width="1.0" height="71.6" fill="#c9a648" opacity="0.59"/>
<rect x="307.8" y="29.9" width="1.6" height="117.0" fill="#c9a648" opacity="0.88"/>
<rect x="156.5" y="103.6" width="1.0" height="56.2" fill="#e9cf7a" opacity="0.40"/>
<rect x="58.9" y="98.6" width="2.2" height="62.1" fill="#c9a648" opacity="0.39"/>
<rect x="256.3" y="32.0" width="0.8" height="91.5" fill="#e9cf7a" opacity="0.38"/>
<rect x="205.4" y="102.0" width="1.0" height="50.4" fill="#e9cf7a" opacity="0.82"/>
<rect x="98.2" y="25.2" width="1.2" height="64.3" fill="#c9a648" opacity="0.65"/>
<rect x="325.3" y="-2.7" width="2.8" height="135.2" fill="#c9a648" opacity="0.84"/>
<rect x="322.6" y="95.4" width="2.2" height="44.0" fill="#e9cf7a" opacity="0.39"/>
<rect x="340.4" y="83.2" width="1.0" height="66.1" fill="#d8b858" opacity="0.77"/>
<rect x="55.2" y="64.3" width="2.8" height="47.4" fill="#c9a648" opacity="0.34"/>
<rect x="305.9" y="2.7" width="1.2" height="109.1" fill="#e9cf7a" opacity="0.45"/>
<rect x="301.2" y="50.9" width="0.8" height="82.2" fill="#c9a648" opacity="0.76"/>
<rect x="127.0" y="106.8" width="1.2" height="51.6" fill="#c9a648" opacity="0.42"/>
<rect x="198.2" y="86.9" width="2.2" height="59.9" fill="#f5e3a0" opacity="0.45"/>
<rect x="359.9" y="97.1" width="1.6" height="45.8" fill="#e9cf7a" opacity="0.57"/>
<rect x="153.0" y="27.9" width="1.0" height="105.8" fill="#f5e3a0" opacity="0.56"/>
<rect x="305.7" y="97.6" width="2.8" height="44.4" fill="#f5e3a0" opacity="0.73"/>
<rect x="55.8" y="95.9" width="0.8" height="69.1" fill="#c9a648" opacity="0.43"/>
<rect x="345.1" y="9.5" width="2.8" height="117.8" fill="#c9a648" opacity="0.43"/>
<rect x="387.7" y="38.5" width="0.8" height="76.9" fill="#f5e3a0" opacity="0.51"/>
<rect x="7.6" y="56.5" width="1.2" height="70.6" fill="#f5e3a0" opacity="0.31"/>
<rect x="199.8" y="-2.3" width="0.8" height="166.4" fill="#e9cf7a" opacity="0.77"/>
<rect x="103.6" y="-5.2" width="1.0" height="142.2" fill="#c9a648" opacity="0.46"/>
<rect x="331.3" y="71.1" width="2.2" height="91.9" fill="#c9a648" opacity="0.54"/>
<rect x="273.2" y="0.7" width="1.6" height="47.2" fill="#e9cf7a" opacity="0.71"/>
<rect x="104.9" y="-8.0" width="2.2" height="51.9" fill="#d8b858" opacity="0.46"/>
<rect x="26.0" y="93.5" width="2.2" height="54.7" fill="#c9a648" opacity="0.50"/>
<rect x="361.4" y="22.1" width="1.0" height="53.4" fill="#e9cf7a" opacity="0.62"/>
<rect x="378.0" y="21.4" width="2.8" height="58.9" fill="#f5e3a0" opacity="0.86"/>
<rect x="207.1" y="14.7" width="1.2" height="89.6" fill="#f5e3a0" opacity="0.70"/>
<rect x="313.4" y="109.3" width="2.2" height="40.6" fill="#d8b858" opacity="0.31"/>
<rect x="200.6" y="19.5" width="2.8" height="87.6" fill="#c9a648" opacity="0.69"/>
<rect x="256.0" y="55.5" width="1.2" height="102.6" fill="#d8b858" opacity="0.88"/>
<rect x="383.2" y="31.1" width="2.8" height="119.0" fill="#d8b858" opacity="0.72"/>
<rect x="157.8" y="31.7" width="0.8" height="45.1" fill="#f5e3a0" opacity="0.38"/>
<rect x="168.0" y="-3.4" width="2.2" height="126.0" fill="#f5e3a0" opacity="0.53"/>
<rect x="233.5" y="73.1" width="1.2" height="42.4" fill="#c9a648" opacity="0.41"/>
<rect x="1.4" y="33.7" width="1.2" height="70.4" fill="#d8b858" opacity="0.89"/>
<rect x="13.4" y="95.9" width="1.2" height="46.6" fill="#c9a648" opacity="0.41"/>
<rect x="32.7" y="23.5" width="0.8" height="107.3" fill="#e9cf7a" opacity="0.45"/>
<rect x="103.0" y="0.8" width="0.8" height="90.0" fill="#f5e3a0" opacity="0.33"/>
<rect x="118.7" y="17.9" width="1.0" height="103.3" fill="#c9a648" opacity="0.62"/>
<rect x="298.1" y="76.5" width="2.2" height="64.5" fill="#d8b858" opacity="0.47"/>
<rect x="17.1" y="90.2" width="2.8" height="71.9" fill="#d8b858" opacity="0.68"/>
<rect x="354.9" y="80.3" width="0.8" height="66.0" fill="#d8b858" opacity="0.79"/>
<rect x="33.2" y="-5.0" width="1.6" height="123.4" fill="#c9a648" opacity="0.88"/>
<rect x="217.8" y="65.3" width="1.6" height="78.0" fill="#f5e3a0" opacity="0.71"/>
<rect x="1.3" y="85.7" width="2.2" height="70.1" fill="#e9cf7a" opacity="0.60"/>
<rect x="257.1" y="-2.1" width="0.8" height="134.4" fill="#f5e3a0" opacity="0.45"/>
<rect x="91.6" y="80.8" width="1.6" height="50.4" fill="#c9a648" opacity="0.69"/>
<rect x="329.8" y="-0.8" width="0.8" height="155.4" fill="#d8b858" opacity="0.47"/>
<rect x="30.2" y="7.7" width="1.2" height="70.0" fill="#d8b858" opacity="0.75"/>
<rect x="4.9" y="-2.7" width="2.8" height="74.6" fill="#d8b858" opacity="0.70"/>
<rect x="263.5" y="24.9" width="1.6" height="92.2" fill="#e9cf7a" opacity="0.58"/>
<rect x="387.4" y="55.9" width="1.6" height="61.9" fill="#e9cf7a" opacity="0.35"/>
<rect x="112.9" y="-0.8" width="1.2" height="104.3" fill="#c9a648" opacity="0.90"/>
<rect x="81.8" y="103.5" width="1.0" height="44.7" fill="#f5e3a0" opacity="0.65"/>
<rect x="371.6" y="5.9" width="0.8" height="138.5" fill="#f5e3a0" opacity="0.61"/>
<rect x="90.2" y="97.7" width="0.8" height="53.7" fill="#c9a648" opacity="0.31"/>
<rect x="265.8" y="38.7" width="1.6" height="103.5" fill="#f5e3a0" opacity="0.55"/>
<rect x="47.2" y="29.8" width="1.6" height="71.2" fill="#e9cf7a" opacity="0.50"/>
<rect x="366.6" y="13.5" width="1.2" height="41.3" fill="#f5e3a0" opacity="0.74"/>
<rect x="25.3" y="36.8" width="1.6" height="117.6" fill="#f5e3a0" opacity="0.35"/>
<rect x="333.2" y="23.7" width="2.8" height="45.3" fill="#d8b858" opacity="0.70"/>
<rect x="97.2" y="21.9" width="1.2" height="93.2" fill="#c9a648" opacity="0.41"/>
<rect x="344.9" y="87.4" width="2.2" height="64.3" fill="#d8b858" opacity="0.85"/>
<rect x="280.6" y="-4.1" width="1.0" height="135.3" fill="#f5e3a0" opacity="0.57"/>
<rect x="189.4" y="99.4" width="1.6" height="54.6" fill="#f5e3a0" opacity="0.40"/>
<rect x="109.9" y="20.7" width="1.6" height="117.8" fill="#d8b858" opacity="0.69"/>
<rect x="117.3" y="56.9" width="1.0" height="67.3" fill="#e9cf7a" opacity="0.40"/>
<rect x="81.1" y="98.7" width="1.2" height="53.6" fill="#c9a648" opacity="0.43"/>
<rect x="166.7" y="55.7" width="2.2" height="57.2" fill="#e9cf7a" opacity="0.40"/>
<rect x="124.5" y="34.2" width="0.8" height="114.3" fill="#c9a648" opacity="0.42"/>
<rect x="149.3" y="79.5" width="0.8" height="49.8" fill="#c9a648" opacity="0.46"/>
<rect x="108.2" y="106.1" width="2.8" height="42.5" fill="#d8b858" opacity="0.60"/>
<rect x="36.1" y="97.6" width="1.6" height="50.9" fill="#f5e3a0" opacity="0.69"/>
<rect x="331.0" y="94.7" width="2.8" height="40.7" fill="#c9a648" opacity="0.32"/>
<rect x="377.6" y="48.8" width="2.2" height="45.6" fill="#c9a648" opacity="0.86"/>
<rect x="379.2" y="19.8" width="2.2" height="51.6" fill="#e9cf7a" opacity="0.39"/>
<rect x="367.2" y="76.6" width="1.6" height="72.0" fill="#e9cf7a" opacity="0.76"/>
<rect x="215.1" y="-5.3" width="0.8" height="142.7" fill="#f5e3a0" opacity="0.44"/>
<rect x="375.3" y="65.2" width="0.8" height="72.1" fill="#e9cf7a" opacity="0.56"/>
<rect x="27.4" y="52.9" width="1.0" height="82.6" fill="#e9cf7a" opacity="0.53"/>
<rect x="4.1" y="26.2" width="2.8" height="86.0" fill="#d8b858" opacity="0.88"/>
<rect x="185.4" y="18.2" width="2.8" height="66.6" fill="#f5e3a0" opacity="0.88"/>
<rect x="21.6" y="13.3" width="0.8" height="139.7" fill="#f5e3a0" opacity="0.69"/>
<rect x="88.9" y="40.9" width="2.8" height="71.5" fill="#f5e3a0" opacity="0.60"/>
<rect x="280.1" y="33.5" width="1.2" height="76.7" fill="#e9cf7a" opacity="0.30"/>
<rect x="80.0" y="106.4" width="1.0" height="46.1" fill="#c9a648" opacity="0.79"/>
<rect x="86.4" y="81.3" width="1.6" height="53.2" fill="#d8b858" opacity="0.87"/>
<rect x="349.6" y="48.2" width="2.2" height="110.8" fill="#d8b858" opacity="0.33"/>
<rect x="359.6" y="-3.5" width="1.6" height="43.1" fill="#e9cf7a" opacity="0.66"/>
<rect x="276.8" y="12.1" width="1.2" height="91.2" fill="#e9cf7a" opacity="0.73"/>
<rect x="389.0" y="101.8" width="2.2" height="48.0" fill="#c9a648" opacity="0.41"/>
<rect x="12.4" y="69.7" width="1.2" height="61.3" fill="#c9a648" opacity="0.52"/>
<rect x="66.0" y="-9.7" width="0.8" height="78.0" fill="#d8b858" opacity="0.51"/>
<rect x="148.3" y="82.2" width="0.8" height="53.5" fill="#e9cf7a" opacity="0.78"/>
<rect x="275.1" y="13.5" width="1.2" height="100.9" fill="#f5e3a0" opacity="0.57"/>
<rect x="287.6" y="46.9" width="2.8" height="89.9" fill="#c9a648" opacity="0.45"/>
<rect x="15.9" y="-5.8" width="1.2" height="48.2" fill="#d8b858" opacity="0.85"/>
<rect x="291.4" y="97.8" width="2.2" height="49.6" fill="#e9cf7a" opacity="0.46"/>
<rect x="102.2" y="76.0" width="0.8" height="55.8" fill="#e9cf7a" opacity="0.47"/>
<rect x="9.5" y="18.1" width="1.6" height="91.3" fill="#f5e3a0" opacity="0.87"/>
<rect x="356.3" y="87.8" width="0.8" height="45.1" fill="#f5e3a0" opacity="0.60"/>
<rect x="320.9" y="82.7" width="1.2" height="66.3" fill="#c9a648" opacity="0.50"/>
<rect x="141.1" y="83.9" width="1.0" height="43.3" fill="#d8b858" opacity="0.42"/>
<rect x="159.0" y="67.9" width="1.0" height="68.0" fill="#c9a648" opacity="0.63"/>
<rect x="344.6" y="108.5" width="0.8" height="44.6" fill="#c9a648" opacity="0.35"/>
<rect x="194.4" y="75.2" width="1.6" height="62.7" fill="#c9a648" opacity="0.44"/>
<rect x="241.9" y="70.9" width="2.8" height="81.2" fill="#e9cf7a" opacity="0.81"/>
<rect x="304.1" y="25.3" width="1.2" height="68.1" fill="#f5e3a0" opacity="0.46"/>
<rect x="77.7" y="19.7" width="2.2" height="66.1" fill="#d8b858" opacity="0.39"/>
<rect x="127.3" y="37.5" width="1.0" height="127.8" fill="#e9cf7a" opacity="0.60"/>
<rect x="254.8" y="108.9" width="1.0" height="41.7" fill="#c9a648" opacity="0.58"/>
<rect x="356.6" y="-5.2" width="1.0" height="78.5" fill="#d8b858" opacity="0.37"/>
<rect x="362.8" y="34.7" width="1.2" height="119.1" fill="#e9cf7a" opacity="0.57"/>
<rect x="41.3" y="61.5" width="1.2" height="80.0" fill="#f5e3a0" opacity="0.43"/>
<rect x="55.1" y="14.5" width="2.8" height="68.4" fill="#d8b858" opacity="0.66"/>
<rect x="317.8" y="88.3" width="2.2" height="55.4" fill="#f5e3a0" opacity="0.52"/>
<rect x="30.4" y="-6.2" width="1.6" height="105.5" fill="#e9cf7a" opacity="0.59"/>
<rect x="310.4" y="69.7" width="2.8" height="48.7" fill="#d8b858" opacity="0.62"/>
<rect x="155.1" y="22.5" width="1.6" height="142.2" fill="#e9cf7a" opacity="0.70"/>
<rect x="121.8" y="58.0" width="1.2" height="64.3" fill="#d8b858" opacity="0.55"/>
<rect x="152.4" y="38.6" width="1.0" height="122.3" fill="#c9a648" opacity="0.56"/>
<rect x="44.3" y="0.9" width="1.0" height="112.3" fill="#d8b858" opacity="0.52"/>
<rect x="5.8" y="56.2" width="0.8" height="84.7" fill="#f5e3a0" opacity="0.85"/>
<rect x="287.5" y="10.6" width="1.0" height="80.2" fill="#e9cf7a" opacity="0.40"/>
<rect x="42.4" y="48.9" width="1.0" height="102.1" fill="#f5e3a0" opacity="0.88"/>
<rect x="49.4" y="103.2" width="0.8" height="62.3" fill="#c9a648" opacity="0.59"/>
<rect x="33.7" y="75.5" width="2.8" height="74.8" fill="#d8b858" opacity="0.83"/>
<rect x="242.2" y="63.8" width="2.2" height="52.2" fill="#d8b858" opacity="0.58"/>
<rect x="16.3" y="102.6" width="1.0" height="43.7" fill="#d8b858" opacity="0.52"/>
<line x1="-15.8" y1="168" x2="-582.0" y2="240" stroke="#e5c868" stroke-width=".9" opacity=".5"/>
<line x1="-6.6" y1="168" x2="-548.0" y2="240" stroke="#e5c868" stroke-width=".9" opacity=".5"/>
<line x1="2.6" y1="168" x2="-514.0" y2="240" stroke="#e5c868" stroke-width=".9" opacity=".5"/>
<line x1="11.8" y1="168" x2="-480.0" y2="240" stroke="#e5c868" stroke-width=".9" opacity=".5"/>
<line x1="21.0" y1="168" x2="-446.0" y2="240" stroke="#e5c868" stroke-width=".9" opacity=".5"/>
<line x1="30.2" y1="168" x2="-412.0" y2="240" stroke="#e5c868" stroke-width=".9" opacity=".5"/>
<line x1="39.4" y1="168" x2="-378.0" y2="240" stroke="#e5c868" stroke-width=".9" opacity=".5"/>
<line x1="48.6" y1="168" x2="-344.0" y2="240" stroke="#e5c868" stroke-width=".9" opacity=".5"/>
<line x1="57.8" y1="168" x2="-310.0" y2="240" stroke="#e5c868" stroke-width=".9" opacity=".5"/>
<line x1="67.0" y1="168" x2="-276.0" y2="240" stroke="#e5c868" stroke-width=".9" opacity=".5"/>
<line x1="76.2" y1="168" x2="-242.0" y2="240" stroke="#e5c868" stroke-width=".9" opacity=".5"/>
<line x1="85.4" y1="168" x2="-208.0" y2="240" stroke="#e5c868" stroke-width=".9" opacity=".5"/>
<line x1="94.6" y1="168" x2="-174.0" y2="240" stroke="#e5c868" stroke-width=".9" opacity=".5"/>
<line x1="103.8" y1="168" x2="-140.0" y2="240" stroke="#e5c868" stroke-width=".9" opacity=".5"/>
<line x1="113.0" y1="168" x2="-106.0" y2="240" stroke="#e5c868" stroke-width=".9" opacity=".5"/>
<line x1="122.2" y1="168" x2="-72.0" y2="240" stroke="#e5c868" stroke-width=".9" opacity=".5"/>
<line x1="131.4" y1="168" x2="-38.0" y2="240" stroke="#e5c868" stroke-width=".9" opacity=".5"/>
<line x1="140.6" y1="168" x2="-4.0" y2="240" stroke="#e5c868" stroke-width=".9" opacity=".5"/>
<line x1="149.8" y1="168" x2="30.0" y2="240" stroke="#e5c868" stroke-width=".9" opacity=".5"/>
<line x1="159.0" y1="168" x2="64.0" y2="240" stroke="#e5c868" stroke-width=".9" opacity=".5"/>
<line x1="168.2" y1="168" x2="98.0" y2="240" stroke="#e5c868" stroke-width=".9" opacity=".5"/>
<line x1="177.4" y1="168" x2="132.0" y2="240" stroke="#e5c868" stroke-width=".9" opacity=".5"/>
<line x1="186.6" y1="168" x2="166.0" y2="240" stroke="#e5c868" stroke-width=".9" opacity=".5"/>
<line x1="195.8" y1="168" x2="200.0" y2="240" stroke="#e5c868" stroke-width=".9" opacity=".5"/>
<line x1="205.0" y1="168" x2="234.0" y2="240" stroke="#e5c868" stroke-width=".9" opacity=".5"/>
<line x1="214.2" y1="168" x2="268.0" y2="240" stroke="#e5c868" stroke-width=".9" opacity=".5"/>
<line x1="223.4" y1="168" x2="302.0" y2="240" stroke="#e5c868" stroke-width=".9" opacity=".5"/>
<line x1="232.6" y1="168" x2="336.0" y2="240" stroke="#e5c868" stroke-width=".9" opacity=".5"/>
<line x1="241.8" y1="168" x2="370.0" y2="240" stroke="#e5c868" stroke-width=".9" opacity=".5"/>
<line x1="251.0" y1="168" x2="404.0" y2="240" stroke="#e5c868" stroke-width=".9" opacity=".5"/>
<line x1="260.2" y1="168" x2="438.0" y2="240" stroke="#e5c868" stroke-width=".9" opacity=".5"/>
<line x1="269.4" y1="168" x2="472.0" y2="240" stroke="#e5c868" stroke-width=".9" opacity=".5"/>
<line x1="278.6" y1="168" x2="506.0" y2="240" stroke="#e5c868" stroke-width=".9" opacity=".5"/>
<line x1="287.8" y1="168" x2="540.0" y2="240" stroke="#e5c868" stroke-width=".9" opacity=".5"/>
<line x1="297.0" y1="168" x2="574.0" y2="240" stroke="#e5c868" stroke-width=".9" opacity=".5"/>
<line x1="306.2" y1="168" x2="608.0" y2="240" stroke="#e5c868" stroke-width=".9" opacity=".5"/>
<line x1="315.4" y1="168" x2="642.0" y2="240" stroke="#e5c868" stroke-width=".9" opacity=".5"/>
<line x1="324.6" y1="168" x2="676.0" y2="240" stroke="#e5c868" stroke-width=".9" opacity=".5"/>
<line x1="333.8" y1="168" x2="710.0" y2="240" stroke="#e5c868" stroke-width=".9" opacity=".5"/>
<line x1="343.0" y1="168" x2="744.0" y2="240" stroke="#e5c868" stroke-width=".9" opacity=".5"/>
<line x1="352.2" y1="168" x2="778.0" y2="240" stroke="#e5c868" stroke-width=".9" opacity=".5"/>
<line x1="361.4" y1="168" x2="812.0" y2="240" stroke="#e5c868" stroke-width=".9" opacity=".5"/>
<line x1="370.6" y1="168" x2="846.0" y2="240" stroke="#e5c868" stroke-width=".9" opacity=".5"/>
<line x1="379.8" y1="168" x2="880.0" y2="240" stroke="#e5c868" stroke-width=".9" opacity=".5"/>
<line x1="389.0" y1="168" x2="914.0" y2="240" stroke="#e5c868" stroke-width=".9" opacity=".5"/>
<line x1="398.2" y1="168" x2="948.0" y2="240" stroke="#e5c868" stroke-width=".9" opacity=".5"/>
</g>
<rect x="0" y="163.5" width="390" height="4" fill="#ffe28a" opacity=".9" filter="url(#b4)"/>
<ellipse cx="195" cy="166" rx="200" ry="16" fill="#ffe9a0" opacity=".28"/>
<rect width="390" height="240" fill="url(#t4v)"/>
<text x="4" y="25" font-size="17" fill="#f1ead8" textLength="363" lengthAdjust="spacingAndGlyphs" font-family="Noto Sans CJK SC,sans-serif">三等奖获奖视频：《手护“净”界直播间》杨雅婷（遂宁市中心</text>
<text x="4" y="49" font-size="17" fill="#f1ead8" textLength="30" lengthAdjust="spacingAndGlyphs" >医院）</text>
<text x="9" y="150" font-size="41" fill="#fff" textLength="362" lengthAdjust="spacingAndGlyphs" font-family="Noto Sans CJK SC,sans-serif" font-weight="700" stroke="#000" stroke-width="4.5" paint-order="stroke" stroke-linejoin="round">手护净“界”健康直播间</text>
<text x="74" y="206" font-size="12.5" fill="#e4dcc4" textLength="227" lengthAdjust="spacingAndGlyphs" >知识小科普——那些你知道和不知道的手卫生</text>
<text x="198" y="238" font-size="14.5" fill="#b9ad8c" textLength="110" lengthAdjust="spacingAndGlyphs" opacity=".85">——遂宁市中心医院</text>
<text x="-4" y="230" font-size="7.5" fill="#f1ead8" font-weight="700">00:02</text>
<text x="364" y="230" font-size="7.5" fill="#f1ead8" font-weight="700">03:31</text>
<rect x="0" y="236.5" width="86" height="2" fill="#d9d2c0" opacity=".8"/>
</svg></div>
<!-- THUMBS-END -->

<div class="ttl" style="left:31px;">双手赠予我的</div>
<div class="ttl" style="left:471px;">多重耐药菌科普小知识</div>
<div class="ttl" style="left:911px;">守护患者安全的每一道防线--…</div>
<div class="ttl" style="left:1351px;">手护“净”界直播间</div>

<!-- card 4 : comments -->
<div class="card" style="left:4px;top:1002px;width:1780px;height:700px;"></div>
<div class="t f28" style="left:35.5px;top:1043.5px;color:#333;">留言</div>
<div class="hr" style="left:6px;top:1104px;width:1776px;"></div>
<svg class="abs" style="left:36px;top:1121px;" width="38" height="38" viewBox="36 1121 38 38">
 <defs><radialGradient id="em" cx="45%" cy="35%" r="70%"><stop offset="0" stop-color="#ffe788"/><stop offset=".6" stop-color="#f8bf3c"/><stop offset="1" stop-color="#d98a1c"/></radialGradient></defs>
 <circle cx="54.4" cy="1140.2" r="14.4" fill="url(#em)" stroke="#d9962e" stroke-width="1"/>
 <ellipse cx="49.6" cy="1136" rx="1.7" ry="2.4" fill="#5a3210"/><ellipse cx="59" cy="1136" rx="1.7" ry="2.4" fill="#5a3210"/>
 <path d="M46.2 1141.6 Q54.4 1144 62.6 1141.6 Q61.5 1150.5 54.4 1150.8 Q47.3 1150.5 46.2 1141.6 Z" fill="#8a2a12"/>
 <path d="M50 1148 Q54.4 1145.6 58.8 1148 Q56.8 1150.6 54.4 1150.6 Q52 1150.6 50 1148 Z" fill="#e8604a"/>
</svg>

<div class="abs" style="left:34px;top:1160px;width:1738px;height:180px;box-sizing:border-box;border:2px solid #c2c2c2;border-radius:16px;box-shadow:inset 0 2px 3px rgba(0,0,0,.06);"></div>
<div class="t" style="left:34.5px;top:1370.5px;color:#444;font-size:29.4px;">评分</div>
<div class="abs" style="left:119px;top:1360px;width:126px;height:50px;box-sizing:border-box;border:2px solid #c6c6c6;border-radius:11px;background:linear-gradient(#e9e9e9,#f2f2f2 55%,#fbfbfb);box-shadow:inset 0 0 5px rgba(0,0,0,.10);"></div>
<div class="t" style="left:138px;top:1371px;font-size:26.7px;color:#222;">10分</div>
<svg class="abs" style="left:214px;top:1368px;" width="20" height="34" viewBox="214 1368 20 34"><path d="M217.4 1382.4 L223.7 1372.6 L230 1382.4 Z M217.4 1387.6 L230 1387.6 L223.7 1397.4 Z" fill="#333"/></svg>

<div class="abs" style="left:1598px;top:1434px;width:144px;height:76px;background:#4f8fd8;border-radius:6px;"></div>
<div class="t" style="left:1598px;top:1460.5px;width:144px;text-align:center;color:#fff;font-size:30px;font-weight:700;letter-spacing:2px;text-indent:2px;">留言</div>
<div class="abs" style="left:26px;top:1544px;width:120px;height:120px;border-radius:9px;background:#babdc9;overflow:hidden;">
<svg width="120" height="120" viewBox="26 1544 120 120">
 <defs><radialGradient id="fc" cx="50%" cy="45%" r="60%"><stop offset="0" stop-color="#fdebd9"/><stop offset=".75" stop-color="#f9d3b6"/><stop offset="1" stop-color="#e3ab8c"/></radialGradient>
 <radialGradient id="hr" cx="45%" cy="38%" r="55%"><stop offset="0" stop-color="#5a5a5a"/><stop offset=".5" stop-color="#222"/><stop offset="1" stop-color="#0a0a0a"/></radialGradient>
 <radialGradient id="ck" cx="50%" cy="50%" r="50%"><stop offset="0" stop-color="#f19a95" stop-opacity=".8"/><stop offset="1" stop-color="#f19a95" stop-opacity="0"/></radialGradient></defs>
 <path d="M58 1672 Q60 1651 86 1650 Q112 1651 114 1672 Z" fill="#a5342b"/>
 <path d="M76 1644 H96 V1652 Q86 1660 76 1652 Z" fill="#f3c8a8"/>
 <ellipse cx="86" cy="1613" rx="37.5" ry="34" fill="url(#fc)"/>
 <ellipse cx="63" cy="1626" rx="8" ry="6" fill="url(#ck)"/><ellipse cx="104" cy="1626" rx="8" ry="6" fill="url(#ck)"/>
 <path d="M49 1618 Q44 1590 57 1577 Q70 1565 90 1567 Q112 1568 121 1588 Q127 1604 121 1622 Q118 1628 113 1620 Q106 1612 108 1596 Q96 1606 80 1609 Q62 1612 55 1622 Q52 1626 49 1618 Z" fill="url(#hr)"/>
 <path d="M116 1584 Q118 1574 126 1575 Q130 1577 128 1582 Q126 1578 122 1580 Q119 1582 118 1588 Z" fill="#111"/>
 <circle cx="68.5" cy="1612.6" r="9.4" fill="#fff"/><circle cx="99.8" cy="1612.6" r="9.4" fill="#fff"/>
 <circle cx="68.5" cy="1612.8" r="5" fill="#000"/><circle cx="99.8" cy="1612.8" r="5" fill="#000"/>
</svg></div>
<svg class="abs" style="left:170px;top:1546px;" width="190" height="44" viewBox="170 1546 190 44">
 <rect x="178.0" y="1552" width="30.8" height="31.2" rx="4" fill="#ec7441"/>
 <polygon points="193.4,1557.2 196.9,1563.8 204.2,1565.1 199.0,1570.4 200.1,1577.8 193.4,1574.5 186.7,1577.8 187.8,1570.4 182.6,1565.1 189.9,1563.8" fill="#fff" stroke="#fff" stroke-width="2.6" stroke-linejoin="round"/>
 <rect x="213.2" y="1552" width="30.8" height="31.2" rx="4" fill="#ec7441"/>
 <polygon points="228.6,1557.2 232.1,1563.8 239.4,1565.1 234.2,1570.4 235.3,1577.8 228.6,1574.5 221.9,1577.8 223.0,1570.4 217.8,1565.1 225.1,1563.8" fill="#fff" stroke="#fff" stroke-width="2.6" stroke-linejoin="round"/>
 <rect x="248.4" y="1552" width="30.8" height="31.2" rx="4" fill="#ec7441"/>
 <polygon points="263.8,1557.2 267.3,1563.8 274.6,1565.1 269.4,1570.4 270.5,1577.8 263.8,1574.5 257.1,1577.8 258.2,1570.4 253.0,1565.1 260.3,1563.8" fill="#fff" stroke="#fff" stroke-width="2.6" stroke-linejoin="round"/>
 <rect x="283.6" y="1552" width="30.8" height="31.2" rx="4" fill="#ec7441"/>
 <polygon points="299.0,1557.2 302.5,1563.8 309.8,1565.1 304.6,1570.4 305.7,1577.8 299.0,1574.5 292.3,1577.8 293.4,1570.4 288.2,1565.1 295.5,1563.8" fill="#fff" stroke="#fff" stroke-width="2.6" stroke-linejoin="round"/>
 <rect x="318.8" y="1552" width="30.8" height="31.2" rx="4" fill="#ec7441"/>
 <polygon points="334.2,1557.2 337.7,1563.8 345.0,1565.1 339.8,1570.4 340.9,1577.8 334.2,1574.5 327.5,1577.8 328.6,1570.4 323.4,1565.1 330.7,1563.8" fill="#fff" stroke="#fff" stroke-width="2.6" stroke-linejoin="round"/>
</svg>
<div class="t f28" style="left:178.5px;top:1597.5px;color:#333;">多耐的防控措施，还挺全面的</div>


<!-- ============ SIDEBAR ============ -->
<div class="card" style="left:1804px;top:-20px;width:600px;height:343px;"></div>
<div class="card" style="left:1804px;top:354px;width:600px;height:1184px;"></div>
<div class="card" style="left:1804px;top:1568px;width:600px;height:200px;"></div>

<!-- SB-BEGIN -->
<div class="sth" id="st0" style="top:-100.0px;"><svg width="220" height="140" viewBox="0 0 220 140" font-family="Liberation Sans,Noto Sans CJK SC,sans-serif">
<defs><radialGradient id="s0bg" cx="55%" cy="70%" r="75%"><stop offset="0" stop-color="#f4f8fe"/><stop offset=".45" stop-color="#c3daf6"/><stop offset="1" stop-color="#6f9fdb"/></radialGradient></defs>
<rect width="220" height="140" fill="url(#s0bg)"/>
<path d="M86 100 Q110 80 134 100 L150 140 H100 Z" fill="#fff" opacity=".55"/>
<path d="M100 100 L112 118 L124 100 Q112 92 100 100 Z" fill="#f4c9cf" opacity=".7"/>
<circle cx="183" cy="106" r="9" fill="#fff" opacity=".8"/>
<text x="58" y="130.5" font-size="20" fill="#eaf1ff" textLength="157" lengthAdjust="spacingAndGlyphs" font-weight="900" stroke="#3453b8" stroke-width="2.6" paint-order="stroke" stroke-linejoin="round">——“感”退新生危机</text>
</svg></div>
<div class="t ssub" style="top:7.5px;">盛夏的果实</div>
<div class="t sdate" style="top:5.2px;">2025-08-17</div>
<div class="dash" style="left:1826px;top:88px;width:556px;"></div>
<div class="sth" id="st1" style="top:112.0px;"><svg width="220" height="140" viewBox="0 0 220 140" font-family="Liberation Sans,Noto Sans CJK SC,sans-serif">
<defs>
<linearGradient id="s1w" x1="0" y1="0" x2="0" y2="1"><stop offset="0" stop-color="#5a5045"/><stop offset=".14" stop-color="#9c876a"/><stop offset=".3" stop-color="#bfa783"/><stop offset="1" stop-color="#b59b76"/></linearGradient>
<linearGradient id="s1s" x1="0" y1="0" x2="0" y2="1"><stop offset="0" stop-color="#e3ecf9"/><stop offset=".35" stop-color="#c3d6f4"/><stop offset=".7" stop-color="#86aeea"/><stop offset="1" stop-color="#3f7ddc"/></linearGradient>
<filter id="bs1"><feGaussianBlur stdDeviation="0.5"/></filter></defs>
<rect width="220" height="140" fill="url(#s1w)"/>
<g filter="url(#bs1)">
<rect x="0" y="0" width="220" height="9" fill="#3e3a36"/>
<rect x="192" y="26" width="28" height="100" fill="#c9b594" opacity=".7"/>
<rect x="54.5" y="21" width="136" height="104" fill="#20242c"/>
<rect x="56.5" y="23" width="132" height="100" fill="url(#s1s)"/>
<g fill="#e9eef5"><rect x="86" y="101" width="14" height="13"/><rect x="103" y="104" width="16" height="10"/><rect x="122" y="107" width="18" height="7" fill="#c9d4e6"/><rect x="143" y="103" width="24" height="11"/><rect x="170" y="106" width="14" height="8" fill="#c9d4e6"/></g>
<rect x="56.5" y="113" width="132" height="10" fill="#3f7ddc"/>
<rect x="20.5" y="32" width="8.5" height="14" fill="#16161a"/><rect x="213.5" y="33" width="7" height="17" fill="#16161a"/>
<rect x="28" y="83" width="20" height="13" fill="#0f0f12"/>
<path d="M8 97 H55 L50 112 H42 V140 H20 V112 H13 Z" fill="#1a181b"/>
<ellipse cx="72.5" cy="64.5" rx="4.2" ry="5.8" fill="#d9b59a"/><path d="M68 62 Q72 55 77 62 Q73 59 68 62Z" fill="#1a1a1a"/>
<path d="M63 82 Q64 74 72 73 Q82 74 86 84 L88 108 L84 110 V140 H64 V110 L61 100 Z" fill="#151a2a"/>
<path d="M84 80 L90 66 L92 68 L88 84 Z" fill="#d9b59a"/>
<rect x="71" y="72" width="2.5" height="9" fill="#333"/>
<rect x="137" y="115.5" width="47" height="24.5" fill="#183248"/><rect x="137" y="115.5" width="47" height="3" fill="#24506e"/>
<ellipse cx="177.5" cy="95" rx="4.2" ry="5.5" fill="#e0bda4"/><path d="M173 93 Q177 85 183 92 L184 104 Q181 97 180 92 Q176 90 173 93 Z" fill="#151515"/>
<path d="M166 112 Q168 101 177 101 Q187 102 188 114 V128 H170 L164 116 Z" fill="#eeeeea"/>
<path d="M192 106 Q203 101 212 105 L210 128 H194 Z" fill="#2c57a3"/><rect x="196" y="126" width="16" height="14" fill="#1d2433"/><rect x="186" y="121" width="10" height="3" fill="#1d2433"/>
</g>
<text x="92.5" y="62.5" font-size="7.2" fill="#1d2f66" textLength="61" lengthAdjust="spacingAndGlyphs" font-weight="700" font-family="Noto Serif CJK SC,serif">“手卫”先锋知识小竞赛</text>
<text x="4" y="19.5" font-size="10.4" fill="#fff" textLength="204.5" lengthAdjust="spacingAndGlyphs" >一等奖获奖视频：《手卫健康》罗佳欣、蒋羽婷、汤小萍等（遂</text>
<text x="4" y="34" font-size="10.4" fill="#fff" textLength="46.5" lengthAdjust="spacingAndGlyphs" >宁市中心医院）</text>
</svg></div>
<div class="t f32 stitle" style="top:116.2px;">手卫生健康</div>
<div class="t ssub" style="top:219.5px;">盛夏的果实</div>
<div class="t sdate" style="top:217.2px;">2025-08-17</div>
<div class="t f28" style="left:1835.5px;top:395.5px;color:#333;">热门视频</div>
<div class="t f28" style="left:2308px;top:392px;color:#222;">more</div>
<div class="hr" style="left:1806px;top:456px;width:596px;"></div>
<div class="sth" id="st2" style="top:478.0px;"><svg width="220" height="140" viewBox="0 0 220 140" font-family="Liberation Sans,Noto Sans CJK SC,sans-serif">
<defs>
<linearGradient id="s2l" x1="0" y1="0" x2="1" y2="0"><stop offset="0" stop-color="#aeb6cf"/><stop offset=".3" stop-color="#d4d8e6"/><stop offset="1" stop-color="#c6cad9"/></linearGradient>
<linearGradient id="s2r" x1="0" y1="0" x2="1" y2="1"><stop offset="0" stop-color="#e4cfcf"/><stop offset="1" stop-color="#c7afb8"/></linearGradient>
<linearGradient id="s2b" x1="0" y1="0" x2="0" y2="1"><stop offset="0" stop-color="#000" stop-opacity="0"/><stop offset="1" stop-color="#000" stop-opacity=".5"/></linearGradient>
<filter id="bs2"><feGaussianBlur stdDeviation="0.7"/></filter></defs>
<rect width="220" height="140" fill="url(#s2r)"/>
<g filter="url(#bs2)">
<polygon points="0,0 72,0 116,26 116,140 0,140" fill="url(#s2l)"/>
<polygon points="116,26 126,18 126,140 116,140" fill="#b9b4c4"/>
<rect x="126" y="0" width="30" height="40" fill="#ecd9d8" opacity=".7"/>
<rect x="0" y="44" width="7" height="20" rx="3" fill="#5f86cf"/><rect x="0" y="8" width="5" height="14" fill="#8ea6d8"/>
<rect x="0" y="78" width="52" height="9" rx="4" fill="#c8ccd8" stroke="#a9aebf" stroke-width=".8"/>
<polygon points="0,98 26,104 26,140 0,140" fill="#8f9099"/>
<g fill="none" stroke="#b3b8c9" stroke-width=".8"><rect x="26" y="27" width="54" height="30" transform="skewY(8)"/><rect x="26" y="60" width="54" height="60" transform="skewY(8)"/><rect x="84" y="26" width="28" height="34" transform="skewY(8)"/><rect x="84" y="64" width="28" height="40" transform="skewY(8)"/></g>
<g transform="skewY(9)"><rect x="32" y="29.5" width="36" height="15" fill="#1f6e58"/><rect x="86.5" y="32" width="21" height="10.5" fill="#1f6e58"/><rect x="35" y="66" width="17" height="8.5" fill="#1f6e58"/><rect x="62" y="62" width="13.5" height="8.5" fill="#1f6e58"/></g>
<g fill="#6ea0d8"><rect x="55" y="84" width="5" height="3"/><rect x="62" y="85" width="5" height="3"/><rect x="70" y="84" width="4" height="3"/></g>
<g><rect x="36" y="92" width="4" height="4" fill="#8fe8d8"/><rect x="46" y="91" width="4" height="4" fill="#58b868"/><rect x="55" y="90" width="3.5" height="4" fill="#e07a70"/><rect x="63" y="89" width="3.5" height="4" fill="#e07a70"/><rect x="71" y="88" width="3.5" height="4" fill="#58b868"/><rect x="49" y="97" width="4" height="4" fill="#e89a50"/><rect x="61" y="95" width="4" height="4" fill="#e8d860"/><rect x="36" y="100" width="4" height="5" fill="#68c8a8"/></g>
<g fill="#d07a80" opacity=".8"><rect x="88" y="116" width="2" height="3"/><rect x="94" y="113" width="2" height="3"/><rect x="100" y="111" width="2" height="3"/><rect x="88" y="124" width="2" height="3"/><rect x="94" y="122" width="2" height="3"/><rect x="106" y="109" width="2" height="3"/></g>
<path d="M24 0 H68 Q72 20 66 34 Q52 36 42 26 Q30 14 24 0 Z" fill="#2f7a3c"/><path d="M58 0 H70 Q74 14 68 30 Q60 16 58 0Z" fill="#1d5a2a"/>
<path d="M36 2 L48 0 L108 72 L98 80 Z" fill="#e6c9b6"/><path d="M34 0 H50 L56 14 L44 20 Z" fill="#efe3dc"/>
<path d="M107 76 Q112 72 122 78 L130 94 Q150 100 160 112 L172 140 H112 Q108 110 107 76 Z" fill="#2f6a7a"/>
<path d="M132 98 L146 118 L156 108" fill="none" stroke="#5aa0b8" stroke-width="2"/>
<ellipse cx="139" cy="72" rx="17" ry="24" fill="#e2c2ae"/>
<path d="M114 62 Q116 58 124 60 L131 66 L129 88 Q122 92 116 88 Q113 76 114 62 Z" fill="#7fb5cd"/>
<ellipse cx="148" cy="80" rx="6" ry="12" fill="#2a2220"/>
<path d="M127 48 Q130 34 150 31 Q172 32 178 52 Q186 76 178 90 Q168 98 158 88 Q150 66 140 58 Q132 52 127 48 Z" fill="#2f6cb8"/>
<path d="M150 34 Q166 50 168 90" fill="none" stroke="#4a86cc" stroke-width="1.5"/>
<path d="M126 64 L176 56" stroke="#e8ecf4" stroke-width="2.4"/><path d="M128 88 Q140 104 158 98 L170 94" fill="none" stroke="#e8ecf4" stroke-width="2.2"/>
</g>
<rect x="0" y="118" width="220" height="22" fill="url(#s2b)"/>
<rect x="3" y="129" width="214" height="1.1" fill="#ddd" opacity=".8"/>
<g fill="#fff" opacity=".9"><polygon points="3.5,133 3.5,137.5 7,135.2"/><rect x="10" y="133.2" width="3.5" height="4"/><rect x="23" y="133.2" width="4" height="4" opacity=".6"/><rect x="30" y="133.2" width="4" height="4" opacity=".6"/><rect x="166" y="134" width="5" height="2.2"/><rect x="177" y="134" width="4" height="2.2"/><rect x="186" y="133.2" width="3.5" height="3.8" opacity=".7"/><rect x="193" y="133.2" width="3.5" height="3.8" opacity=".7"/><rect x="200" y="133.2" width="3.5" height="3.8" opacity=".7"/><rect x="207" y="133.2" width="3.5" height="3.8" opacity=".7"/><rect x="214" y="133.2" width="3.5" height="3.8" opacity=".7"/></g>
<text x="4.5" y="14.8" font-size="7.6" fill="#fff" textLength="44.5" lengthAdjust="spacingAndGlyphs" >手术室终末消毒</text>
<g transform="skewY(9)" font-family="Liberation Mono,monospace" font-weight="700" font-style="italic" fill="#c8f7d8"><text x="33" y="42" font-size="13.5" textLength="34">15:46:0</text><text x="87.5" y="41" font-size="9" textLength="19">0000</text><text x="36" y="73.6" font-size="8.5" textLength="15">193</text><text x="62.6" y="69.6" font-size="8.5" textLength="12.4">759</text></g>
</svg></div>
<div class="t f32 stitle" style="top:482.2px;">手术室终末消毒操作…</div>
<div class="t ssub" style="top:535.5px;">细节多多<i class="ex">！</i></div>
<div class="t ssub" style="top:585.5px;">小小牧童</div>
<div class="t sdate" style="top:583.2px;">2025-03-14</div>
<div class="dash" style="left:1826px;top:666.0px;width:556px;"></div>
<div class="sth" id="st3" style="top:691.0px;left:1827px;width:219px;height:138.5px;border-radius:5px;"><svg width="220" height="140" viewBox="0 0 220 140" font-family="Liberation Sans,Noto Sans CJK SC,sans-serif">
<defs><radialGradient id="s3bg" cx="50%" cy="50%" r="72%"><stop offset="0" stop-color="#f6fafe"/><stop offset=".55" stop-color="#e6f1fa"/><stop offset="1" stop-color="#bcd8ee"/></radialGradient></defs>
<rect width="220" height="140" fill="url(#s3bg)"/>
<rect x="3" y="4.5" width="16.5" height="6" rx="3" fill="#dbe9f4"/><rect x="3" y="13" width="26" height="4.2" fill="#deebf5"/>
<g stroke="#cfe0ee" stroke-width="1.2" opacity=".6"><line x1="30" y1="64" x2="22" y2="86"/><line x1="40" y1="64" x2="36" y2="92"/><line x1="52" y1="64" x2="54" y2="98"/><line x1="180" y1="62" x2="205" y2="74"/><line x1="170" y1="64" x2="196" y2="84"/></g>
<rect x="200.5" y="112.5" width="11" height="10.5" rx="2.2" fill="#fff"/><polygon points="204.5,115.4 204.5,120.4 208.6,117.9" fill="#cfe0ee"/>
<path d="M203 112.5 L202 110.6 M209 112.5 L210 110.6" stroke="#fff" stroke-width="1"/>
<text x="23.5" y="60.5" font-size="13.6" fill="#67a4e6" textLength="172" lengthAdjust="spacingAndGlyphs" font-weight="700">医院环境卫生学监测采样操作</text>
<text x="84.5" y="79.2" font-size="7.3" fill="#86a8d2" textLength="50.5" lengthAdjust="spacingAndGlyphs" font-family="Noto Serif CJK SC,serif" font-weight="700">启东市人民医院</text>
<text x="56" y="92.6" font-size="7.3" fill="#86a8d2" textLength="108" lengthAdjust="spacingAndGlyphs" font-family="Noto Serif CJK SC,serif" font-weight="700">启东市医院感染管理质量控制中心</text>
<text x="92" y="106.8" font-size="7.3" fill="#86a8d2" textLength="34" lengthAdjust="spacingAndGlyphs" font-family="Liberation Serif,Noto Serif CJK SC,serif" font-weight="700">2021年7月</text>
</svg></div>
<div class="t f32 stitle" style="top:694.2px;">医院环境卫生学监测…</div>
<div class="t ssub" style="top:747.5px;">感控人员基本功，你真的会采</div>
<div class="t ssub" style="top:797.5px;">小小牧童</div>
<div class="t sdate" style="top:795.2px;">2025-03-14</div>
<div class="dash" style="left:1826px;top:878.0px;width:556px;"></div>
<div class="sth" id="st4" style="top:902.0px;"><svg width="220" height="140" viewBox="0 0 220 140" font-family="Liberation Sans,Noto Sans CJK SC,sans-serif">
<defs><linearGradient id="s4bg" x1="0" y1="0" x2="1" y2="0"><stop offset="0" stop-color="#cdeaf5"/><stop offset=".45" stop-color="#e6f6fa"/><stop offset="1" stop-color="#f5fbfd"/></linearGradient>
<linearGradient id="s4f" x1="0" y1="0" x2="1" y2="0"><stop offset="0" stop-color="#fff" stop-opacity="0"/><stop offset="1" stop-color="#eef9fc" stop-opacity="1"/></linearGradient>
<filter id="bs4"><feGaussianBlur stdDeviation="0.8"/></filter></defs>
<rect width="220" height="140" fill="url(#s4bg)"/>
<g filter="url(#bs4)">
<polygon points="0,10 30,20 30,64 0,58" fill="#bfe3f1"/>
<polygon points="2,36 38,30 38,70 2,78" fill="#7fc4e2"/>
<polygon points="20,34 60,42 60,84 20,80" fill="#8fd0e6" opacity=".9"/>
<polygon points="0,62 46,56 46,92 0,100" fill="#78bfe0"/>
<polygon points="44,44 70,50 70,88 44,86" fill="#6fc0d8"/>
<polygon points="4,98 46,90 46,122 4,128" fill="#6aa6dc"/>
<polygon points="62,62 86,58 86,88 62,92" fill="#7fc8e0" opacity=".9"/>
<polygon points="80,56 96,60 96,86 80,84" fill="#6a9fdc" opacity=".8"/>
<polygon points="84,74 112,70 112,90 84,94" fill="#9ad4ea" opacity=".8"/>
<polygon points="46,90 74,96 74,112 46,108" fill="#cbe8f3"/>
<rect x="50" y="0" width="70" height="140" fill="url(#s4f)" opacity=".55"/>
<g transform="translate(7 -1.5)"><polygon points="146,19.5 151.5,26 146,32.5 140.5,26" fill="#d8382c"/><polygon points="140.5,26 146,32.5 143.2,35.6 138,29" fill="#2f5db0"/><polygon points="146,32.5 149,36 146,39.5 143,36" fill="#f0d43a"/></g>
</g>
<text x="10.5" y="76.2" font-size="41" fill="#e2291c" textLength="21.5" lengthAdjust="spacingAndGlyphs" font-weight="700" stroke="#e2291c" stroke-width="1.2" stroke-linejoin="round">S</text>
<text x="21.5" y="44.6" font-size="8.2" fill="#fff" textLength="16" lengthAdjust="spacingAndGlyphs" font-weight="700">感控</text>
<text x="21.5" y="86.8" font-size="8.2" fill="#fff" textLength="16" lengthAdjust="spacingAndGlyphs" font-weight="700">计划</text>
<text x="37" y="52" font-size="4.2" fill="#fff" font-weight="700">Safety</text>
<text x="36" y="62.5" font-size="4.2" fill="#fff" font-weight="700">Share</text>
<text x="36" y="72.5" font-size="4.2" fill="#fff" font-weight="700">Support</text>
<text x="158.5" y="30.2" font-size="11.6" fill="#4a4a4a" textLength="26.5" lengthAdjust="spacingAndGlyphs" >SIFIC</text>
<text x="128" y="57.4" font-size="10" fill="#4ba7c3" textLength="57" lengthAdjust="spacingAndGlyphs" font-weight="900">2025系列直播</text>
<text x="131" y="86" font-size="15.2" fill="#0d0d0d" textLength="54" lengthAdjust="spacingAndGlyphs" font-weight="900" stroke="#0d0d0d" stroke-width=".5">以案为鉴</text>
<circle cx="157.5" cy="69.5" r="3" fill="none" stroke="#e0323a" stroke-width=".7"/>
<rect x="130.8" y="93" width="55.6" height="9.2" fill="#69b6d1"/>
<text x="134" y="100.4" font-size="7.4" fill="#fff" textLength="49" lengthAdjust="spacingAndGlyphs" font-weight="700">第二季 第二期</text>
<text x="43" y="122.6" font-size="5.3" fill="#76878e" textLength="110" lengthAdjust="spacingAndGlyphs" >主办单位：上海斯菲克微生物应用技术研究中心</text>
<text x="43" y="132.4" font-size="5.3" fill="#76878e" textLength="79" lengthAdjust="spacingAndGlyphs" >承办单位：复旦大学附属中山医院</text>
</svg></div>
<div class="t f32 stitle" style="top:906.2px;">以案为鉴第二季02…</div>
<div class="t ssub" style="top:959.5px;">田靓从卫监视角看审证</div>
<div class="t ssub" style="top:1009.5px;">小小牧童</div>
<div class="t sdate" style="top:1007.2px;">2025-03-21</div>
<div class="dash" style="left:1826px;top:1090.0px;width:556px;"></div>
<div class="sth" id="st5" style="top:1114.0px;"><svg width="220" height="140" viewBox="0 0 220 140" font-family="Liberation Sans,Noto Sans CJK SC,sans-serif">
<defs><linearGradient id="s5bg" x1="0" y1="0" x2="1" y2="0"><stop offset="0" stop-color="#cdeaf5"/><stop offset=".45" stop-color="#e6f6fa"/><stop offset="1" stop-color="#f5fbfd"/></linearGradient>
<linearGradient id="s5f" x1="0" y1="0" x2="1" y2="0"><stop offset="0" stop-color="#fff" stop-opacity="0"/><stop offset="1" stop-color="#eef9fc" stop-opacity="1"/></linearGradient>
<filter id="bs5"><feGaussianBlur stdDeviation="0.8"/></filter></defs>
<rect width="220" height="140" fill="url(#s5bg)"/>
<g filter="url(#bs5)">
<polygon points="0,10 30,20 30,64 0,58" fill="#bfe3f1"/>
<polygon points="2,36 38,30 38,70 2,78" fill="#7fc4e2"/>
<polygon points="20,34 60,42 60,84 20,80" fill="#8fd0e6" opacity=".9"/>
<polygon points="0,62 46,56 46,92 0,100" fill="#78bfe0"/>
<polygon points="44,44 70,50 70,88 44,86" fill="#6fc0d8"/>
<polygon points="4,98 46,90 46,122 4,128" fill="#6aa6dc"/>
<polygon points="62,62 86,58 86,88 62,92" fill="#7fc8e0" opacity=".9"/>
<polygon points="80,56 96,60 96,86 80,84" fill="#6a9fdc" opacity=".8"/>
<polygon points="84,74 112,70 112,90 84,94" fill="#9ad4ea" opacity=".8"/>
<polygon points="46,90 74,96 74,112 46,108" fill="#cbe8f3"/>
<rect x="50" y="0" width="70" height="140" fill="url(#s5f)" opacity=".55"/>
<g transform="translate(7 -1.5)"><polygon points="146,19.5 151.5,26 146,32.5 140.5,26" fill="#d8382c"/><polygon points="140.5,26 146,32.5 143.2,35.6 138,29" fill="#2f5db0"/><polygon points="146,32.5 149,36 146,39.5 143,36" fill="#f0d43a"/></g>
</g>
<text x="10.5" y="76.2" font-size="41" fill="#e2291c" textLength="21.5" lengthAdjust="spacingAndGlyphs" font-weight="700" stroke="#e2291c" stroke-width="1.2" stroke-linejoin="round">S</text>
<text x="21.5" y="44.6" font-size="8.2" fill="#fff" textLength="16" lengthAdjust="spacingAndGlyphs" font-weight="700">感控</text>
<text x="21.5" y="86.8" font-size="8.2" fill="#fff" textLength="16" lengthAdjust="spacingAndGlyphs" font-weight="700">计划</text>
<text x="37" y="52" font-size="4.2" fill="#fff" font-weight="700">Safety</text>
<text x="36" y="62.5" font-size="4.2" fill="#fff" font-weight="700">Share</text>
<text x="36" y="72.5" font-size="4.2" fill="#fff" font-weight="700">Support</text>
<text x="158.5" y="30.2" font-size="11.6" fill="#4a4a4a" textLength="26.5" lengthAdjust="spacingAndGlyphs" >SIFIC</text>
<text x="128" y="57.4" font-size="10" fill="#4ba7c3" textLength="57" lengthAdjust="spacingAndGlyphs" font-weight="900">2025系列直播</text>
<text x="131" y="86" font-size="15.2" fill="#0d0d0d" textLength="54" lengthAdjust="spacingAndGlyphs" font-weight="900" stroke="#0d0d0d" stroke-width=".5">以案为鉴</text>
<circle cx="157.5" cy="69.5" r="3" fill="none" stroke="#e0323a" stroke-width=".7"/>
<rect x="130.8" y="93" width="55.6" height="9.2" fill="#69b6d1"/>
<text x="134" y="100.4" font-size="7.4" fill="#fff" textLength="49" lengthAdjust="spacingAndGlyphs" font-weight="700">第二季 第一期</text>
<text x="43" y="122.6" font-size="5.3" fill="#76878e" textLength="110" lengthAdjust="spacingAndGlyphs" >主办单位：上海斯菲克微生物应用技术研究中心</text>
<text x="43" y="132.4" font-size="5.3" fill="#76878e" textLength="79" lengthAdjust="spacingAndGlyphs" >承办单位：复旦大学附属中山医院</text>
</svg></div>
<div class="t f32 stitle" style="top:1118.2px;">以案为鉴第二季01…</div>
<div class="t ssub" style="top:1171.5px;">高晓东&amp;范鹏超解读AI应用</div>
<div class="t ssub" style="top:1221.5px;">小小牧童</div>
<div class="t sdate" style="top:1219.2px;">2025-03-21</div>
<div class="dash" style="left:1826px;top:1302.0px;width:556px;"></div>
<div class="sth" id="st6" style="top:1326.0px;"><svg width="220" height="140" viewBox="0 0 220 140" font-family="Liberation Sans,Noto Sans CJK SC,sans-serif">
<defs><filter id="bs6"><feGaussianBlur stdDeviation="0.9"/></filter>
<pattern id="s6w" width="7" height="6.4" patternUnits="userSpaceOnUse"><rect width="7" height="6.4" fill="#c9c3c4"/><rect x=".8" y="1" width="5.6" height="4" fill="#3f5d60"/></pattern>
<pattern id="s6d" width="4" height="4.4" patternUnits="userSpaceOnUse"><rect width="4" height="4.4" fill="#c6ccd3"/><rect x="1" y="1.2" width="1.8" height="2" fill="#6d7885"/></pattern>
<pattern id="s6e" width="3.2" height="3.4" patternUnits="userSpaceOnUse"><rect width="3.2" height="3.4" fill="#d6d9dd"/><rect x=".8" y="1" width="1.5" height="1.5" fill="#97a1ad"/></pattern>
</defs>
<rect width="220" height="140" fill="#8f999d"/>
<g filter="url(#bs6)">
<rect x="0" y="0" width="220" height="42" fill="#6d8d7a"/>
<polygon points="16,16 60,8 120,3 152,18 124,44 70,42 30,38" fill="#3d7845"/>
<polygon points="0,2 38,0 40,9 0,15" fill="#cdd1d4"/><polygon points="8,15 82,3 84,8 10,21" fill="#8fc0b8"/><polygon points="84,6 112,2 116,8 90,12" fill="#e2b59a"/>
<polygon points="168,0 200,0 208,20 180,26" fill="#8a9aa3"/><polygon points="198,0 220,0 220,32 206,28" fill="#9aa1aa"/>
<polygon points="180,22 214,28 212,44 184,38" fill="#4d8a4e"/><polygon points="150,8 176,6 180,16 154,20" fill="#44804a"/>
<rect x="20" y="34" width="28" height="58" fill="url(#s6e)" transform="skewY(-8)"/><rect x="48" y="26" width="22" height="58" fill="url(#s6e)" transform="skewY(-4)"/>
<rect x="68" y="28" width="22" height="30" fill="url(#s6e)"/><rect x="90" y="22" width="24" height="34" fill="url(#s6e)"/><rect x="116" y="10" width="24" height="52" fill="url(#s6e)"/><rect x="140" y="16" width="20" height="72" fill="url(#s6e)"/><rect x="158" y="12" width="18" height="62" fill="url(#s6e)"/>
<polygon points="0,16 14,18 18,84 0,90" fill="#b9b4b3"/>
<polygon points="178,38 206,52 206,76 178,66" fill="#b4b8c0"/>
<polygon points="200,36 220,40 220,140 196,140 " fill="url(#s6e)"/>
<ellipse cx="186" cy="68" rx="13" ry="12" fill="#3e7a46"/><ellipse cx="40" cy="96" rx="19" ry="10" fill="#41644a"/><ellipse cx="21" cy="70" rx="5" ry="11" fill="#3a6a42"/>
<polygon points="0,104 52,100 52,140 0,140" fill="url(#s6d)"/><polygon points="0,95 50,91 52,100 0,104" fill="#7c848b"/>
<polygon points="164,96 196,104 196,140 170,140" fill="#a09596"/><polygon points="170,100 190,106 190,126 172,122" fill="#535b66"/>
<polygon points="78,41 140,41 154,85 59,85" fill="#c0babb"/>
<polygon points="86,46 134,46 144,80 70,80" fill="#aba8aa"/><rect x="94" y="50" width="10" height="6" fill="#6fa05c"/><polygon points="74,78 84,60 88,62 80,80" fill="#6fa05c"/><rect x="128" y="56" width="8" height="16" fill="#6fa05c"/>
<rect x="100" y="62" width="24" height="3" fill="#3a3a44"/>
<polygon points="59,85 154,85 150,140 66,140" fill="#c9c3c4"/>
<polygon points="65,95 149,95 146,140 70,140" fill="url(#s6w)"/>
<rect x="32" y="40" width="8" height="5" fill="#2f5fb8"/>
</g>
<g font-family="Noto Sans CJK SC,sans-serif"><text x="48.5" y="73.5" font-size="31" fill="#fff" textLength="71" lengthAdjust="spacingAndGlyphs" font-weight="400" stroke="#fff" stroke-width=".3">起风了</text>
<text x="120" y="74" font-size="19.5" fill="#3a80d6" textLength="55" lengthAdjust="spacingAndGlyphs" font-weight="700" stroke="#e6effa" stroke-width=".7" paint-order="stroke">感控版</text>
<rect x="72.5" y="88.4" width="22" height="1.6" fill="#fff"/>
<text x="95" y="93.2" font-size="9.6" fill="#fff" textLength="83" lengthAdjust="spacingAndGlyphs" font-weight="900" font-style="italic">CRBSI零容忍</text>
</g></svg></div>
<div class="t f32 stitle" style="top:1330.2px;">起风了（感控版）—…</div>
<div class="t ssub" style="top:1383.5px;">抖音神曲版</div>
<div class="t ssub" style="top:1433.5px;">约书亚03</div>
<div class="t sdate" style="top:1431.2px;">2025-03-16</div>
<div class="t f28" style="left:1835.5px;top:1609.5px;color:#333;">同类视频</div>
<div class="abs" style="left:2409px;top:1404px;width:40px;height:63px;box-sizing:border-box;border:2px solid #d0d0d0;border-radius:7px;background:#efefef;"></div>
<!-- SB-END -->


</body>
</html>
